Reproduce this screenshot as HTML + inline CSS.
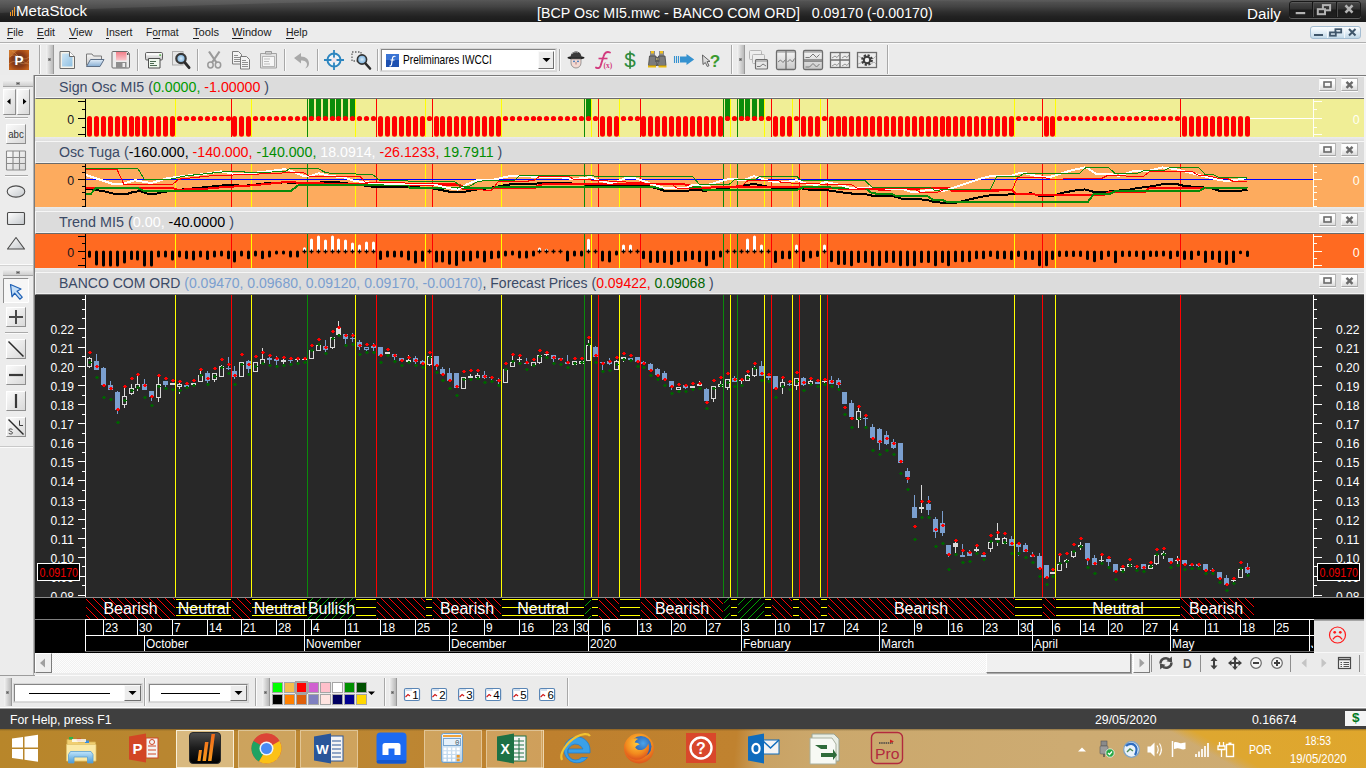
<!DOCTYPE html>
<html><head><meta charset="utf-8"><title>MetaStock</title>
<style>
*{margin:0;padding:0;box-sizing:border-box}
html,body{width:1366px;height:768px;overflow:hidden;background:#ececec}
body{position:relative;font-family:"Liberation Sans",sans-serif;font-size:12px;color:#000}
.a{position:absolute}
svg{position:absolute;left:0;top:0;overflow:visible}
.sep{position:absolute;width:2px;border-left:1px solid #a8a8a8;border-right:1px solid #fbfbfb}
.grip{position:absolute;background:linear-gradient(90deg,#f4f4f4,#d2d2d2 55%,#b9b9b9);border-right:1px solid #9a9a9a}
.grip i{position:absolute;left:2px;width:3px;height:3px;background:#5a5a5a;border:1px solid #8d8d8d}
.tbtn{position:absolute;background:linear-gradient(135deg,#f6f6f6,#dcdcdc);border:1px solid;border-color:#fdfdfd #9c9c9c #9c9c9c #fdfdfd;box-shadow:0 0 0 1px #d0d0d0}
.pt{position:absolute;left:35px;width:1329px;background:#dcdcdc;border-top:1px solid #f6f6f6;border-left:1px solid #f6f6f6;border-bottom:1px solid #6a6a6a;box-shadow:inset 0 -1px 0 #f0f0f0}
.pb{position:absolute;width:17px;height:13px;background:linear-gradient(180deg,#fff 0%,#fbfbfb 40%,#dbdbdb 100%);border:1px solid;border-color:#b2b2b2 #b4b4b4 #a6a6a6 #f6f6f6;box-shadow:0 1px 0 #fbfbfb}
.combo{position:absolute;background:#fff;border:1px solid;border-color:#858585 #dcdcdc #dcdcdc #858585;box-shadow:0 0 0 1px #d6d6d6}
.cbtn{position:absolute;background:#ececec;border:1px solid;border-color:#fafafa #6f6f6f #6f6f6f #fafafa}
</style></head><body>

<div class="a" style="left:0;top:0;width:1366px;height:22px;background:linear-gradient(180deg,#565656 0%,#434343 30%,#2e2e2e 55%,#222 75%,#1b1b1b 100%)"></div>
<svg width="1366" height="22" viewBox="0 0 1366 22"><path d="M0 0H470C330 1 150 6 0 13z" fill="rgba(255,255,255,.075)"/><path d="M235 0H1366V3C900 1 500 0 235 0z" fill="rgba(255,255,255,.03)"/></svg>
<div class="a" style="left:10px;top:12px;width:1px;height:4px;background:#f39a2b"></div>
<div class="a" style="left:12px;top:10px;width:1px;height:6px;background:#f39a2b"></div>
<div class="a" style="left:14px;top:7px;width:1px;height:9px;background:#f39a2b"></div>
<div style="position:absolute;left:15.60px;top:1.00px;height:20px;line-height:20px;font-size:15.20px;letter-spacing:0.000px;white-space:nowrap;transform:scaleX(0.9916);transform-origin:0 0;"><span style="color:#fff">MetaStock</span></div>
<div style="position:absolute;left:537.00px;top:3.00px;height:20px;line-height:20px;font-size:14.60px;letter-spacing:0.000px;white-space:nowrap;transform:scaleX(0.9737);transform-origin:0 0;"><span style="color:#fff">[BCP&nbsp;Osc&nbsp;MI5.mwc&nbsp;-&nbsp;BANCO&nbsp;COM&nbsp;ORD]&nbsp;&nbsp;&nbsp;0.09170&nbsp;(-0.00170)</span></div>
<div style="position:absolute;left:1247.00px;top:3.50px;height:20px;line-height:20px;font-size:15.20px;letter-spacing:0.043px;white-space:nowrap;"><span style="color:#fff">Daily</span></div>
<div class="a" style="left:1289px;top:1px;width:72px;height:17px;border:1px solid #191919;border-radius:3px;background:linear-gradient(180deg,#484848,#303030 48%,#1c1c1c 52%,#202020);box-shadow:0 1px 0 rgba(255,255,255,.28),inset 0 1px 0 rgba(255,255,255,.10)"></div>
<div class="a" style="left:1312px;top:2px;width:2px;height:15px;background:linear-gradient(90deg,#151515 50%,#4c4c4c 50%)"></div>
<div class="a" style="left:1336px;top:2px;width:2px;height:15px;background:linear-gradient(90deg,#151515 50%,#4c4c4c 50%)"></div>
<svg width="1366" height="22" viewBox="0 0 1366 22"><rect x="1295.700" y="12" width="9.500" height="2.200" fill="#b4b4b4"/><rect x="1322.900" y="5.100" width="7.200" height="5.200" fill="none" stroke="#b4b4b4" stroke-width="2"/><rect x="1317.800" y="9.200" width="7.200" height="5" fill="#2a2a2a" stroke="#b4b4b4" stroke-width="2"/><path d="M1345.500 5.300l7 7.300M1352.500 5.300l-7 7.300" stroke="#b4b4b4" stroke-width="2.600"/></svg>
<div class="a" style="left:0;top:22px;width:1366px;height:21px;background:#ececec;border-bottom:1px solid #b0b0b0"></div>
<div class="a" style="left:0;top:43px;width:1366px;height:1px;background:#fafafa"></div>
<div style="position:absolute;left:7.00px;top:24.00px;height:16px;line-height:16px;font-size:11.60px;letter-spacing:0.000px;white-space:nowrap;transform:scaleX(0.8828);transform-origin:0 0;"><span style="color:#1a1a1a">File</span></div>
<div class="a" style="left:7.0px;top:38px;width:6.0px;height:1px;background:#1a1a1a"></div>
<div style="position:absolute;left:37.00px;top:24.00px;height:16px;line-height:16px;font-size:11.60px;letter-spacing:0.000px;white-space:nowrap;transform:scaleX(0.9005);transform-origin:0 0;"><span style="color:#1a1a1a">Edit</span></div>
<div class="a" style="left:37.0px;top:38px;width:7.0px;height:1px;background:#1a1a1a"></div>
<div style="position:absolute;left:69.00px;top:24.00px;height:16px;line-height:16px;font-size:11.60px;letter-spacing:0.000px;white-space:nowrap;transform:scaleX(0.9425);transform-origin:0 0;"><span style="color:#1a1a1a">View</span></div>
<div class="a" style="left:69.0px;top:38px;width:8.0px;height:1px;background:#1a1a1a"></div>
<div style="position:absolute;left:106.00px;top:24.00px;height:16px;line-height:16px;font-size:11.60px;letter-spacing:0.000px;white-space:nowrap;transform:scaleX(0.9135);transform-origin:0 0;"><span style="color:#1a1a1a">Insert</span></div>
<div class="a" style="left:106.0px;top:38px;width:3.0px;height:1px;background:#1a1a1a"></div>
<div style="position:absolute;left:146.00px;top:24.00px;height:16px;line-height:16px;font-size:11.60px;letter-spacing:0.000px;white-space:nowrap;transform:scaleX(0.8847);transform-origin:0 0;"><span style="color:#1a1a1a">Format</span></div>
<div class="a" style="left:153.0px;top:38px;width:7.0px;height:1px;background:#1a1a1a"></div>
<div style="position:absolute;left:192.50px;top:24.00px;height:16px;line-height:16px;font-size:11.60px;letter-spacing:0.000px;white-space:nowrap;transform:scaleX(0.9602);transform-origin:0 0;"><span style="color:#1a1a1a">Tools</span></div>
<div class="a" style="left:192.5px;top:38px;width:6.5px;height:1px;background:#1a1a1a"></div>
<div style="position:absolute;left:232.00px;top:24.00px;height:16px;line-height:16px;font-size:11.60px;letter-spacing:0.000px;white-space:nowrap;transform:scaleX(0.9574);transform-origin:0 0;"><span style="color:#1a1a1a">Window</span></div>
<div class="a" style="left:232.0px;top:38px;width:11.0px;height:1px;background:#1a1a1a"></div>
<div style="position:absolute;left:285.50px;top:24.00px;height:16px;line-height:16px;font-size:11.60px;letter-spacing:0.000px;white-space:nowrap;transform:scaleX(0.9012);transform-origin:0 0;"><span style="color:#1a1a1a">Help</span></div>
<div class="a" style="left:285.5px;top:38px;width:8.5px;height:1px;background:#1a1a1a"></div>
<div class="a" style="left:1310px;top:26px;width:51px;height:13px;border:1px solid #a4bdd2;border-radius:3px;background:linear-gradient(180deg,#fbfdfe 0%,#e4eff7 45%,#c1d8e8 100%)"></div>
<div class="a" style="left:1327px;top:27px;width:1px;height:11px;background:#f2f7fb"></div>
<div class="a" style="left:1344px;top:27px;width:1px;height:11px;background:#f2f7fb"></div>
<svg width="1366" height="44" viewBox="0 0 1366 44"><rect x="1314" y="34" width="9" height="2" fill="#3f566b"/><rect x="1335.400" y="29.200" width="5.800" height="3.300" fill="none" stroke="#3f566b" stroke-width="1.800"/><rect x="1330" y="32.400" width="5.800" height="3.300" fill="#d5e4ef" stroke="#3f566b" stroke-width="1.800"/><path d="M1349 29l6.5 6.5M1355.500 29l-6.5 6.5" stroke="#3f566b" stroke-width="2"/></svg>
<div class="a" style="left:0;top:44px;width:1366px;height:31px;background:#ebebeb"></div>
<svg width="1366" height="80" viewBox="0 0 1366 80"><defs><linearGradient id="gp" x1="0" y1="0" x2="1" y2="1"><stop offset="0" stop-color="#c7661c"/><stop offset=".5" stop-color="#8a2f10"/><stop offset="1" stop-color="#b8511a"/></linearGradient><linearGradient id="gdoc" x1="0" y1="0" x2="1" y2="1"><stop offset="0" stop-color="#cfe6f5"/><stop offset="1" stop-color="#8fc0e2"/></linearGradient><linearGradient id="gsv" x1="0" y1="0" x2="0" y2="1"><stop offset="0" stop-color="#f27f8a"/><stop offset="1" stop-color="#f9c9cd"/></linearGradient><linearGradient id="ggr" x1="0" y1="0" x2="0" y2="1"><stop offset="0" stop-color="#f6f6f6"/><stop offset="1" stop-color="#c9c9c9"/></linearGradient><radialGradient id="glens"><stop offset="0" stop-color="#d8ecfa"/><stop offset="1" stop-color="#6fa9d8"/></radialGradient></defs><radialGradient id="gp2" cx=".5" cy=".5" r=".62"><stop offset="0" stop-color="#4e453f"/><stop offset=".55" stop-color="#8a3a16"/><stop offset="1" stop-color="#c4621c"/></radialGradient><rect x="9" y="50" width="20" height="20" fill="url(#gp2)"/><path d="M9 50h9l-9 8z" fill="#d98a3c" opacity=".55"/><path d="M10 57c5-7 12 7 19 0M9 64c8-8 14 6 20-4M12 51c6 3 10 12 17 13" stroke="#e9a660" stroke-width=".7" fill="none" opacity=".6"/><text x="14.600" y="65" font-family="Liberation Sans" font-weight="bold" font-size="13.500" fill="#fff">P</text><path d="M60 51.500h9.500l5 5v12h-14.500z" fill="#f6f3ea" stroke="#6b6b6b"/><path d="M62 53.500h7l3.500 3.500v9.500h-10.500z" fill="url(#gdoc)"/><path d="M69.500 51.500v5h5" fill="#fdfdfd" stroke="#6b6b6b"/><linearGradient id="gfl" x1="0" y1="0" x2="0" y2="1"><stop offset="0" stop-color="#e3eef8"/><stop offset="1" stop-color="#86add3"/></linearGradient><path d="M86.500 65.500v-11.500h5.500l1.500 2h8v3.500" fill="url(#ggr)" stroke="#7b7b7b"/><path d="M86.500 66.500l4-7h13.500l-4 7z" fill="url(#gfl)" stroke="#5d6f86"/><path d="M113 51.500h14.500l2 2v13.500a1 1 0 0 1-1 1h-15.500a1 1 0 0 1-1-1v-14.500a1 1 0 0 1 1-1z" fill="#ececec" stroke="#6b6b6b"/><rect x="116" y="52" width="10.500" height="8.500" fill="url(#gsv)"/><rect x="116" y="62" width="10.500" height="6" fill="#8e8e8e"/><rect x="122.500" y="63" width="2.500" height="4" fill="#ececec"/><rect x="127" y="53" width="1.500" height="2" fill="#555"/><rect x="145.500" y="52.500" width="17" height="7.500" rx="1.200" fill="url(#ggr)" stroke="#5f5f5f"/><rect x="146.500" y="53.200" width="15" height="2" fill="#fbfbfb"/><rect x="159.300" y="54.300" width="1.800" height="1.600" fill="#57b24d"/><path d="M148.500 58.500h11.500v9.500h-11.500z" fill="#eff8ee" stroke="#4f4f4f"/><path d="M150 61.500h6M150 63.500h3.500M150 65.500h7" stroke="#4c6a52" shape-rendering="crispEdges"/><rect x="172.500" y="51.500" width="10.500" height="13.500" fill="#e6e6e6" stroke="#adadad"/><circle cx="181" cy="58.500" r="4.700" fill="url(#glens)" stroke="#383838" stroke-width="2.200"/><path d="M184.800 62.500l4.300 5.200" stroke="#2c2c2c" stroke-width="2.800" stroke-linecap="round"/><path d="M209 51.500l7.800 11.500M219.500 51.500l-7.800 11.500" stroke="#9a9a9a" stroke-width="2.200"/><ellipse cx="210.500" cy="65" rx="2.700" ry="2.900" fill="none" stroke="#9a9a9a" stroke-width="1.500"/><ellipse cx="218" cy="65" rx="2.700" ry="2.900" fill="none" stroke="#9a9a9a" stroke-width="1.500"/><path d="M232.500 51.500h6l3 3v9.500h-9z" fill="#f3f3f3" stroke="#7b7b7b"/><path d="M234 55.500h4M234 57.500h6M234 59.500h6M234 61.500h6" stroke="#8e8e8e" shape-rendering="crispEdges"/><path d="M240.500 56.500h6l3 3v9.500h-9z" fill="#f3f3f3" stroke="#7b7b7b"/><path d="M242 60.500h4M242 62.500h6M242 64.500h6M242 66.500h6" stroke="#8e8e8e" shape-rendering="crispEdges"/><path d="M260.500 53.500h16v14.500h-16z" fill="#e3e3e3" stroke="#a2a2a2"/><path d="M265.500 54v-2.500h6v2.500z" fill="#d0d0d0" stroke="#9a9a9a"/><rect x="262.500" y="56.500" width="12" height="10" fill="#f6f6f6" stroke="#b7b7b7"/><path d="M264 59h6M264 61.500h5M264 64h6" stroke="#bdbdbd"/><path d="M294 58l7-5v3.500c5 0 8 3 8 7 0 2.500-1.500 4.500-4 5 1.500-1.500 2-2.800 2-4 0-2.500-2.300-4-6-4v3z" fill="#a9a9a9"/><circle cx="334" cy="60" r="6.500" fill="#eef4f8" stroke="#2d86c0" stroke-width="2"/><path d="M334 50v20M324 60h20" stroke="#2d86c0" stroke-width="1.800"/><circle cx="334" cy="60" r="2.600" fill="#f2e4ea"/><rect x="352" y="52" width="9" height="9" fill="none" stroke="#666" stroke-width="1.300" stroke-dasharray="1.500 1.500"/><circle cx="362" cy="59.500" r="4.600" fill="url(#glens)" stroke="#333" stroke-width="1.600"/><path d="M365.500 63.500l4.500 5" stroke="#2c2c2c" stroke-width="2.600" stroke-linecap="round"/><ellipse cx="576" cy="57.800" rx="8.600" ry="1.800" fill="#222"/><path d="M570.500 57.500c0-8 11-8 11 0z" fill="#3a3a3a"/><path d="M572 54c1.500-2 4-2.400 6-1.600" stroke="#999" fill="none"/><path d="M571 59h10v4c0 3-2.500 5-5 5s-5-2-5-5z" fill="#f3d9d3" stroke="#777" stroke-width=".7"/><circle cx="574" cy="61.300" r=".9" fill="#2a6fb8"/><circle cx="578" cy="61.300" r=".9" fill="#2a6fb8"/><path d="M576 62v2.500" stroke="#a77"/><path d="M610 52.500c-3.500-1.500-5.500.5-6.500 4l-3 9.500c-.8 2.200-2.300 2.600-4.500 1.600" stroke="#d23a7e" stroke-width="1.900" fill="none" stroke-linecap="round"/><path d="M598.500 58.500h9" stroke="#d23a7e" stroke-width="1.600"/><text x="603.500" y="68" font-family="Liberation Serif" font-size="7.500" fill="#d23a7e" font-weight="bold">(x)</text><text x="624.300" y="67.300" font-family="Liberation Sans" font-size="20" fill="#2f8a3e" textLength="11.500" lengthAdjust="spacingAndGlyphs">$</text><path d="M630 50.800v18.200" stroke="#2f8a3e" stroke-width="1.200"/><rect x="650" y="51" width="5" height="5" fill="#8a8a8a"/><rect x="659" y="51" width="5" height="5" fill="#8a8a8a"/><rect x="651" y="51" width="3" height="2.500" fill="#f0c020"/><rect x="660" y="51" width="3" height="2.500" fill="#f0c020"/><path d="M649.500 56h6.500l1 9.500h-8.500zM658.500 56h6.500l1 9.500h-8.500z" fill="#7c7c7c" stroke="#444" stroke-width=".8"/><rect x="655" y="57" width="4.500" height="5" fill="#5d5d5d"/><path d="M656 59h3" stroke="#f0e090" stroke-dasharray="1 .5"/><rect x="648" y="65.500" width="8" height="2" fill="#e9b90c"/><rect x="658.500" y="65.500" width="8" height="2" fill="#e9b90c"/><path d="M674.500 56v7M676.500 56v7M678.500 56v7" stroke="#3592d0" stroke-width="1.100"/><path d="M680 56.500h6.500v-2.500l7.700 5.500-7.700 5.500v-2.500h-6.500z" fill="#3592d0"/><path d="M702.500 55l.5 9.500 2.300-2 2 4 1.700-.8-2-4 3-.3z" fill="#dcdcdc" stroke="#555" stroke-width=".9"/><text x="709.800" y="66.500" font-family="Liberation Sans" font-weight="bold" font-size="17" fill="#3a9a2e" textLength="10.500" lengthAdjust="spacingAndGlyphs">?</text><rect x="749.5" y="50.5" width="12" height="9" rx="1" fill="#ededed" stroke="#b5b5b5"/><rect x="752.5" y="54.5" width="12" height="9" rx="1" fill="#ededed" stroke="#b5b5b5"/><rect x="755.500" y="59.500" width="12" height="9.500" rx="1" fill="#e6e6e6" stroke="#6d6d6d" stroke-width="1.200"/><path d="M757 66.500h3l3-2.500 3 2" stroke="#7a7a7a" fill="none"/><path d="M756 61h11" stroke="#8b8b8b"/><rect x="776.500" y="50.500" width="19" height="19" rx="1.500" fill="url(#ggr)" stroke="#6d6d6d" stroke-width="1.300"/><path d="M786 50.500v19" stroke="#6d6d6d" stroke-width="1.300"/><path d="M777 52h18" stroke="#8c8c8c"/><path d="M778 62l2.500-2 2.500 2.500 2.500-3M787.500 62l2.500-2.500 2.500 2.500 2-3.500" stroke="#7a7a7a" fill="none"/><rect x="803.500" y="50.500" width="19" height="19" rx="1.500" fill="url(#ggr)" stroke="#6d6d6d" stroke-width="1.300"/><path d="M803.500 60h19" stroke="#6d6d6d" stroke-width="1.300"/><path d="M804 52h18M804 61.500h18" stroke="#8c8c8c"/><path d="M805.500 57.500h4l3.500-3.500 3.500 3.500 3-3M805.500 67h4l3.500-3.500 3.500 3.500 3-3" stroke="#7a7a7a" fill="none"/><rect x="830.500" y="52.500" width="19" height="15" fill="#ededed" stroke="#6d6d6d" stroke-width="1.300"/><path d="M840 52.500v15M830.500 60h19" stroke="#6d6d6d" stroke-width="1.300"/><path d="M832 58l3-2 2 1.500 2-2.500M842 58l3-2 2 1.500 2-2.500M832 66l3-2 2 1.500 2-2.500M842 66l3-2 2 1.500 2-2.500" stroke="#8a8a8a" fill="none" stroke-width=".9"/><rect x="857.500" y="52.500" width="19" height="15" fill="#ededed" stroke="#6d6d6d" stroke-width="1.300"/><path d="M858 56l4 2 3-3M870 57l3 2 3-3M858 64l4-1.500 2 2M871 64l3-2 2 2" stroke="#b0b0b0" fill="none" stroke-width=".9"/><circle cx="867" cy="60" r="4.300" fill="none" stroke="#3d3d3d" stroke-width="3.200" stroke-dasharray="1.900 1.480"/><circle cx="867" cy="60" r="3.200" fill="none" stroke="#3d3d3d" stroke-width="2"/><circle cx="867" cy="60" r="1.500" fill="#f4f4f4"/></svg>
<div class="sep" style="left:39px;top:45px;height:29px"></div>
<div class="sep" style="left:137px;top:49px;height:22px"></div>
<div class="sep" style="left:197px;top:49px;height:22px"></div>
<div class="sep" style="left:284px;top:49px;height:22px"></div>
<div class="sep" style="left:317px;top:49px;height:22px"></div>
<div class="sep" style="left:377px;top:49px;height:22px"></div>
<div class="sep" style="left:559px;top:49px;height:22px"></div>
<div class="sep" style="left:731px;top:45px;height:29px"></div>
<div class="sep" style="left:887px;top:45px;height:29px"></div>
<div class="grip" style="left:46px;top:45px;width:8px;height:29px"><i style="top:13px"></i></div>
<div class="grip" style="left:737px;top:45px;width:8px;height:29px"><i style="top:13px"></i></div>
<div class="combo" style="left:381px;top:49px;width:175px;height:22px"></div>
<div class="cbtn" style="left:538px;top:51px;width:16px;height:18px"></div>
<svg width="1366" height="80" viewBox="0 0 1366 80"><path d="M542.500 58h8l-4 4z" fill="#000"/><rect x="386" y="54" width="13" height="13" fill="#1d50b0"/><rect x="386" y="54" width="13" height="6" fill="#3a74d4"/><path d="M395.500 56.500c-2.500-1-3 1-3.200 3l-.8 5c-.2 1.200-1 1.600-2 1.200M390.500 60h4" stroke="#fff" stroke-width="1.2" fill="none"/></svg>
<div style="position:absolute;left:402.50px;top:52.00px;height:16px;line-height:16px;font-size:12.20px;letter-spacing:0.000px;white-space:nowrap;transform:scaleX(0.8310);transform-origin:0 0;"><span style="color:#000">Preliminares&nbsp;IWCCI</span></div>
<div class="a" style="left:0;top:75px;width:34px;height:600px;background:#ececec"></div>
<div class="a" style="left:0;top:264px;width:34px;height:1px;background:#fbfbfb"></div>
<div class="a" style="left:0;top:265px;width:34px;height:1px;background:#d2d2d2"></div>
<div class="a" style="left:0;top:447px;width:34px;height:1px;background:#fbfbfb"></div>
<div class="a" style="left:0;top:446px;width:34px;height:1px;background:#c9c9c9"></div>
<div class="a" style="left:3px;top:80px;width:30px;height:7px;background:linear-gradient(180deg,#f0f0f0,#cfcfcf);border-bottom:1px solid #a5a5a5"></div>
<div class="a" style="left:16px;top:82px;width:4px;height:3px;background:#5a5a5a;border:1px solid #9a9a9a"></div>
<div class="a" style="left:3px;top:269px;width:30px;height:7px;background:linear-gradient(180deg,#f0f0f0,#cfcfcf);border-bottom:1px solid #a5a5a5"></div>
<div class="a" style="left:16px;top:271px;width:4px;height:3px;background:#5a5a5a;border:1px solid #9a9a9a"></div>
<svg width="40" height="700" viewBox="0 0 40 700"><defs><linearGradient id="lb" x1="0" y1="0" x2="1" y2="1"><stop offset="0" stop-color="#fbfbfb"/><stop offset="1" stop-color="#d8d8d8"/></linearGradient><linearGradient id="lsh" x1="0" y1="0" x2="1" y2="1"><stop offset="0" stop-color="#ffffff"/><stop offset="1" stop-color="#c4c8cc"/></linearGradient></defs><rect x="3.5" y="89.5" width="12" height="25" fill="url(#lb)" stroke="#b8b8b8"/><path d="M4 114.5h12M15.5 90v25" stroke="#8e8e8e" fill="none"/><path d="M3 89.5h12M3.5 89v25" stroke="#fff" fill="none"/><rect x="17.5" y="89.5" width="12" height="25" fill="url(#lb)" stroke="#b8b8b8"/><path d="M18 114.5h12M29.5 90v25" stroke="#8e8e8e" fill="none"/><path d="M17 89.5h12M17.5 89v25" stroke="#fff" fill="none"/><path d="M7 101.500l3.500-3v6zM26.500 101.500l-3.500-3v6z" fill="#000"/><path d="M5 117.500h23" stroke="#a9a9a9"/><path d="M5 118.500h23" stroke="#fbfbfb"/><rect x="6.5" y="124.5" width="19" height="19" fill="url(#lb)" stroke="#b8b8b8"/><path d="M7 143.5h19M25.5 125v19" stroke="#8e8e8e" fill="none"/><path d="M6 124.5h19M6.5 124v19" stroke="#fff" fill="none"/><text x="8.200" y="138" font-family="Liberation Sans" font-size="10.500" fill="#333" textLength="15.500" lengthAdjust="spacingAndGlyphs">abc</text><rect x="6.500" y="151" width="19" height="19" fill="url(#lb)"/><path d="M6.500 151v19M13 151v19M19.500 151v19M25.500 151v19M6.500 151h19M6.500 157.500h19M6.500 163.500h19M6.500 170h19" stroke="#8a8a8a" stroke-width="1.100" fill="none"/><path d="M5 175.500h23" stroke="#a9a9a9"/><path d="M5 176.500h23" stroke="#fbfbfb"/><ellipse cx="16" cy="191.500" rx="8.800" ry="5.600" fill="url(#lsh)" stroke="#4b4b4b" stroke-width="1.100"/><rect x="7.500" y="212.500" width="17" height="12" rx="1" fill="url(#lsh)" stroke="#4b4b4b" stroke-width="1.100"/><path d="M16 237.500l8.500 11.500h-17z" fill="url(#lsh)" stroke="#4b4b4b" stroke-width="1.100" stroke-linejoin="round"/><rect x="3.500" y="278.500" width="25" height="24" fill="#f6f6f6" stroke="#cfcfcf" stroke-dasharray="1 1"/><path d="M3.500 303v-24.500h25" stroke="#8f8f8f" fill="none"/><path d="M4 302.500h24.500v-24" stroke="#fff" fill="none"/><path d="M10.500 284.500l10.500 4.500-4 2.200 5.200 6-2.400 2-5.200-6-2.600 3.600z" fill="#c4def7" stroke="#1d5fb4" stroke-width="1.200" stroke-linejoin="round"/><rect x="6.5" y="307.5" width="19" height="19" fill="url(#lb)" stroke="#b8b8b8"/><path d="M7 326.5h19M25.5 308v19" stroke="#8e8e8e" fill="none"/><path d="M6 307.5h19M6.5 307v19" stroke="#fff" fill="none"/><path d="M16 310v14M9 317h14" stroke="#4a4a4a" stroke-width="2"/><path d="M5 332.500h23" stroke="#a9a9a9"/><path d="M5 333.500h23" stroke="#fbfbfb"/><rect x="6.5" y="339.5" width="19" height="19" fill="url(#lb)" stroke="#b8b8b8"/><path d="M7 358.5h19M25.5 340v19" stroke="#8e8e8e" fill="none"/><path d="M6 339.5h19M6.5 339v19" stroke="#fff" fill="none"/><path d="M8.500 341.500l15 15" stroke="#2a2a2a" stroke-width="1.500"/><rect x="6.5" y="365.5" width="19" height="19" fill="url(#lb)" stroke="#b8b8b8"/><path d="M7 384.5h19M25.5 366v19" stroke="#8e8e8e" fill="none"/><path d="M6 365.5h19M6.5 365v19" stroke="#fff" fill="none"/><path d="M9 375h14" stroke="#3a3a3a" stroke-width="2.200"/><rect x="6.5" y="391.5" width="19" height="19" fill="url(#lb)" stroke="#b8b8b8"/><path d="M7 410.5h19M25.5 392v19" stroke="#8e8e8e" fill="none"/><path d="M6 391.5h19M6.5 391v19" stroke="#fff" fill="none"/><path d="M16 394v14" stroke="#3a3a3a" stroke-width="2.200"/><rect x="6.5" y="417.5" width="19" height="19" fill="url(#lb)" stroke="#b8b8b8"/><path d="M7 436.5h19M25.5 418v19" stroke="#8e8e8e" fill="none"/><path d="M6 417.5h19M6.5 417v19" stroke="#fff" fill="none"/><path d="M8.500 419.500l15 15" stroke="#2a2a2a" stroke-width="1.400"/><path d="M19.500 420.500v5h3.500" stroke="#3a3a3a" fill="none"/><path d="M12.500 429.500c-2-1.200-3.700-.6-3.500.7.300 1.500 3.400 1 3.500 2.600.1 1.300-2 1.700-3.800.5" stroke="#3a3a3a" fill="none" stroke-width=".9"/></svg>
<div class="a" style="left:34px;top:75px;width:1331px;height:600px;background:#e3e3e3"></div>
<div class="a" style="left:33px;top:75px;width:1px;height:600px;background:#b4b4b4"></div>
<div class="a" style="left:35px;top:137px;width:1329px;height:4px;background:linear-gradient(180deg,#ebebeb,#dedede)"></div>
<div class="a" style="left:35px;top:207px;width:1329px;height:4px;background:linear-gradient(180deg,#ebebeb,#dedede)"></div>
<div class="a" style="left:35px;top:268px;width:1329px;height:4px;background:linear-gradient(180deg,#ebebeb,#dedede)"></div>
<div class="a" style="left:34px;top:75px;width:1px;height:598px;background:#7a7a7a"></div>
<div class="a" style="left:34px;top:75px;width:1332px;height:1px;background:#7a7a7a"></div>
<div class="a" style="left:1364px;top:76px;width:2px;height:598px;background:#f3f3f3"></div>
<div class="pt" style="top:76px;height:23px"></div>
<div style="position:absolute;left:59.30px;top:76.80px;height:20px;line-height:20px;font-size:15.20px;letter-spacing:0.000px;white-space:nowrap;transform:scaleX(0.9354);transform-origin:0 0;"><span style="color:#3b4a66">Sign&nbsp;Osc&nbsp;MI5&nbsp;(</span><span style="color:#009a00">0.0000,&nbsp;</span><span style="color:#ff0000">-1.00000&nbsp;</span><span style="color:#3b4a66">)</span></div>
<div class="pb" style="left:1319px;top:78px"></div><div class="pb" style="left:1341px;top:78px"></div>
<svg width="1366" height="768" viewBox="0 0 1366 768"><rect x="1324" y="82" width="7" height="5" fill="none" stroke="#6a6a6a" stroke-width="1.6"/><path d="M1346.500 81.9l6 6M1352.500 81.9l-6 6" stroke="#6a6a6a" stroke-width="2.4"/></svg>
<div class="a" style="left:35px;top:99px;width:1329px;height:38px;background:#f0ee96"></div>
<div class="pt" style="top:141px;height:23px"></div>
<div style="position:absolute;left:59.30px;top:141.80px;height:20px;line-height:20px;font-size:15.20px;letter-spacing:0.000px;white-space:nowrap;transform:scaleX(0.9339);transform-origin:0 0;"><span style="color:#3b4a66">Osc&nbsp;Tuga&nbsp;(</span><span style="color:#000">-160.000,&nbsp;</span><span style="color:#ff0000">-140.000,&nbsp;</span><span style="color:#008c00">-140.000,&nbsp;</span><span style="color:#fff">18.0914,&nbsp;</span><span style="color:#ff0000">-26.1233,&nbsp;</span><span style="color:#008c00">19.7911&nbsp;</span><span style="color:#3b4a66">)</span></div>
<div class="pb" style="left:1319px;top:143px"></div><div class="pb" style="left:1341px;top:143px"></div>
<svg width="1366" height="768" viewBox="0 0 1366 768"><rect x="1324" y="147" width="7" height="5" fill="none" stroke="#6a6a6a" stroke-width="1.6"/><path d="M1346.500 146.9l6 6M1352.500 146.9l-6 6" stroke="#6a6a6a" stroke-width="2.4"/></svg>
<div class="a" style="left:35px;top:164px;width:1329px;height:43px;background:#fdab5e"></div>
<div class="pt" style="top:211px;height:23px"></div>
<div style="position:absolute;left:59.30px;top:211.80px;height:20px;line-height:20px;font-size:15.20px;letter-spacing:0.000px;white-space:nowrap;transform:scaleX(0.9455);transform-origin:0 0;"><span style="color:#3b4a66">Trend&nbsp;MI5&nbsp;(</span><span style="color:#fff">0.00,&nbsp;</span><span style="color:#000">-40.0000&nbsp;</span><span style="color:#3b4a66">)</span></div>
<div class="pb" style="left:1319px;top:213px"></div><div class="pb" style="left:1341px;top:213px"></div>
<svg width="1366" height="768" viewBox="0 0 1366 768"><rect x="1324" y="217" width="7" height="5" fill="none" stroke="#6a6a6a" stroke-width="1.6"/><path d="M1346.500 216.9l6 6M1352.500 216.9l-6 6" stroke="#6a6a6a" stroke-width="2.4"/></svg>
<div class="a" style="left:35px;top:234px;width:1329px;height:34px;background:#ff6a21"></div>
<div class="pt" style="top:272px;height:23px"></div>
<div style="position:absolute;left:59.30px;top:272.80px;height:20px;line-height:20px;font-size:15.20px;letter-spacing:0.000px;white-space:nowrap;transform:scaleX(0.9221);transform-origin:0 0;"><span style="color:#3b4a66">BANCO&nbsp;COM&nbsp;ORD&nbsp;</span><span style="color:#7b9fcf">(0.09470,&nbsp;0.09680,&nbsp;0.09120,&nbsp;0.09170,&nbsp;-0.00170)</span><span style="color:#3b4a66">,&nbsp;Forecast&nbsp;Prices&nbsp;(</span><span style="color:#ff0000">0.09422,&nbsp;</span><span style="color:#006400">0.09068&nbsp;</span><span style="color:#3b4a66">)</span></div>
<div class="pb" style="left:1319px;top:274px"></div><div class="pb" style="left:1341px;top:274px"></div>
<svg width="1366" height="768" viewBox="0 0 1366 768"><rect x="1324" y="278" width="7" height="5" fill="none" stroke="#6a6a6a" stroke-width="1.6"/><path d="M1346.500 277.9l6 6M1352.500 277.9l-6 6" stroke="#6a6a6a" stroke-width="2.4"/></svg>
<div class="a" style="left:35px;top:295px;width:1329px;height:302px;background:#282828"></div>
<svg width="1366" height="768" viewBox="0 0 1366 768" shape-rendering="auto"><defs><clipPath id="c1"><rect x="35" y="99" width="1329" height="38"/></clipPath><clipPath id="c2"><rect x="35" y="164" width="1329" height="43"/></clipPath><clipPath id="c3"><rect x="35" y="234" width="1329" height="34"/></clipPath><clipPath id="c4"><rect x="35" y="295" width="1329" height="302"/></clipPath><pattern id="hr" patternUnits="userSpaceOnUse" width="8" height="8"><rect x="0" y="1" width="1" height="1" fill="#ff0000"/><rect x="1" y="2" width="1" height="1" fill="#ff0000"/><rect x="2" y="3" width="1" height="1" fill="#ff0000"/><rect x="3" y="4" width="1" height="1" fill="#ff0000"/><rect x="4" y="5" width="1" height="1" fill="#ff0000"/><rect x="5" y="6" width="1" height="1" fill="#ff0000"/><rect x="6" y="7" width="1" height="1" fill="#ff0000"/><rect x="7" y="0" width="1" height="1" fill="#ff0000"/></pattern><pattern id="hg" patternUnits="userSpaceOnUse" width="8" height="8"><rect x="0" y="6" width="1" height="1" fill="#00a400"/><rect x="1" y="5" width="1" height="1" fill="#00a400"/><rect x="2" y="4" width="1" height="1" fill="#00a400"/><rect x="3" y="3" width="1" height="1" fill="#00a400"/><rect x="4" y="2" width="1" height="1" fill="#00a400"/><rect x="5" y="1" width="1" height="1" fill="#00a400"/><rect x="6" y="0" width="1" height="1" fill="#00a400"/><rect x="7" y="7" width="1" height="1" fill="#00a400"/></pattern></defs><g stroke-width="1" shape-rendering="crispEdges"><path d="M175.5 99V137" stroke="#ffff00"/><path d="M175.5 164V207" stroke="#ffff00"/><path d="M175.5 234V268" stroke="#ffff00"/><path d="M175.5 295V597" stroke="#ffff00"/><path d="M231.5 99V137" stroke="#ff0000"/><path d="M231.5 164V207" stroke="#ff0000"/><path d="M231.5 234V268" stroke="#ff0000"/><path d="M231.5 295V597" stroke="#ff0000"/><path d="M251.5 99V137" stroke="#ffff00"/><path d="M251.5 164V207" stroke="#ffff00"/><path d="M251.5 234V268" stroke="#ffff00"/><path d="M251.5 295V597" stroke="#ffff00"/><path d="M307.5 99V137" stroke="#0a8a0a"/><path d="M307.5 164V207" stroke="#0a8a0a"/><path d="M307.5 234V268" stroke="#0a8a0a"/><path d="M307.5 295V597" stroke="#0a8a0a"/><path d="M355.5 99V137" stroke="#ffff00"/><path d="M355.5 164V207" stroke="#ffff00"/><path d="M355.5 234V268" stroke="#ffff00"/><path d="M355.5 295V597" stroke="#ffff00"/><path d="M376.5 99V137" stroke="#ff0000"/><path d="M376.5 164V207" stroke="#ff0000"/><path d="M376.5 234V268" stroke="#ff0000"/><path d="M376.5 295V597" stroke="#ff0000"/><path d="M425.5 99V137" stroke="#ffff00"/><path d="M425.5 164V207" stroke="#ffff00"/><path d="M425.5 234V268" stroke="#ffff00"/><path d="M425.5 295V597" stroke="#ffff00"/><path d="M432.5 99V137" stroke="#ff0000"/><path d="M432.5 164V207" stroke="#ff0000"/><path d="M432.5 234V268" stroke="#ff0000"/><path d="M432.5 295V597" stroke="#ff0000"/><path d="M501.5 99V137" stroke="#ffff00"/><path d="M501.5 164V207" stroke="#ffff00"/><path d="M501.5 234V268" stroke="#ffff00"/><path d="M501.5 295V597" stroke="#ffff00"/><path d="M584.5 99V137" stroke="#0a8a0a"/><path d="M584.5 164V207" stroke="#0a8a0a"/><path d="M584.5 234V268" stroke="#0a8a0a"/><path d="M584.5 295V597" stroke="#0a8a0a"/><path d="M591.5 99V137" stroke="#ffff00"/><path d="M591.5 164V207" stroke="#ffff00"/><path d="M591.5 234V268" stroke="#ffff00"/><path d="M591.5 295V597" stroke="#ffff00"/><path d="M598.5 99V137" stroke="#ff0000"/><path d="M598.5 164V207" stroke="#ff0000"/><path d="M598.5 234V268" stroke="#ff0000"/><path d="M598.5 295V597" stroke="#ff0000"/><path d="M619.5 99V137" stroke="#ffff00"/><path d="M619.5 164V207" stroke="#ffff00"/><path d="M619.5 234V268" stroke="#ffff00"/><path d="M619.5 295V597" stroke="#ffff00"/><path d="M640.5 99V137" stroke="#ff0000"/><path d="M640.5 164V207" stroke="#ff0000"/><path d="M640.5 234V268" stroke="#ff0000"/><path d="M640.5 295V597" stroke="#ff0000"/><path d="M723.5 99V137" stroke="#0a8a0a"/><path d="M723.5 164V207" stroke="#0a8a0a"/><path d="M723.5 234V268" stroke="#0a8a0a"/><path d="M723.5 295V597" stroke="#0a8a0a"/><path d="M730.5 99V137" stroke="#ffff00"/><path d="M730.5 164V207" stroke="#ffff00"/><path d="M730.5 234V268" stroke="#ffff00"/><path d="M730.5 295V597" stroke="#ffff00"/><path d="M737.5 99V137" stroke="#0a8a0a"/><path d="M737.5 164V207" stroke="#0a8a0a"/><path d="M737.5 234V268" stroke="#0a8a0a"/><path d="M737.5 295V597" stroke="#0a8a0a"/><path d="M764.5 99V137" stroke="#ffff00"/><path d="M764.5 164V207" stroke="#ffff00"/><path d="M764.5 234V268" stroke="#ffff00"/><path d="M764.5 295V597" stroke="#ffff00"/><path d="M771.5 99V137" stroke="#ff0000"/><path d="M771.5 164V207" stroke="#ff0000"/><path d="M771.5 234V268" stroke="#ff0000"/><path d="M771.5 295V597" stroke="#ff0000"/><path d="M792.5 99V137" stroke="#ffff00"/><path d="M792.5 164V207" stroke="#ffff00"/><path d="M792.5 234V268" stroke="#ffff00"/><path d="M792.5 295V597" stroke="#ffff00"/><path d="M799.5 99V137" stroke="#ff0000"/><path d="M799.5 164V207" stroke="#ff0000"/><path d="M799.5 234V268" stroke="#ff0000"/><path d="M799.5 295V597" stroke="#ff0000"/><path d="M820.5 99V137" stroke="#ffff00"/><path d="M820.5 164V207" stroke="#ffff00"/><path d="M820.5 234V268" stroke="#ffff00"/><path d="M820.5 295V597" stroke="#ffff00"/><path d="M827.5 99V137" stroke="#ff0000"/><path d="M827.5 164V207" stroke="#ff0000"/><path d="M827.5 234V268" stroke="#ff0000"/><path d="M827.5 295V597" stroke="#ff0000"/><path d="M1014.5 99V137" stroke="#ffff00"/><path d="M1014.5 164V207" stroke="#ffff00"/><path d="M1014.5 234V268" stroke="#ffff00"/><path d="M1014.5 295V597" stroke="#ffff00"/><path d="M1042.5 99V137" stroke="#ff0000"/><path d="M1042.5 164V207" stroke="#ff0000"/><path d="M1042.5 234V268" stroke="#ff0000"/><path d="M1042.5 295V597" stroke="#ff0000"/><path d="M1055.5 99V137" stroke="#ffff00"/><path d="M1055.5 164V207" stroke="#ffff00"/><path d="M1055.5 234V268" stroke="#ffff00"/><path d="M1055.5 295V597" stroke="#ffff00"/><path d="M1180.5 99V137" stroke="#ff0000"/><path d="M1180.5 164V207" stroke="#ff0000"/><path d="M1180.5 234V268" stroke="#ff0000"/><path d="M1180.5 295V597" stroke="#ff0000"/></g><g clip-path="url(#c1)"><path d="M311.5 118V95M318.5 118V95M325.5 118V95M332.5 118V95M338.5 118V95M345.5 118V95M352.5 118V95M588.5 118V95M727.5 118V95M741.5 118V95M747.5 118V95M754.5 118V95M761.5 118V95" stroke="#0a8c0a" stroke-width="5" stroke-linecap="round" fill="none"/><path d="M89.5 118.500V134.300M96.5 118.500V134.300M103.5 118.500V134.300M110.5 118.500V134.300M117.5 118.500V134.300M124.5 118.500V134.300M131.5 118.500V134.300M137.5 118.500V134.300M144.5 118.500V134.300M151.5 118.500V134.300M158.5 118.500V134.300M165.5 118.500V134.300M172.5 118.500V134.300M234.5 118.500V134.300M241.5 118.500V134.300M248.5 118.500V134.300M380.5 118.500V134.300M387.5 118.500V134.300M394.5 118.500V134.300M401.5 118.500V134.300M408.5 118.500V134.300M415.5 118.500V134.300M422.5 118.500V134.300M436.5 118.500V134.300M442.5 118.500V134.300M449.5 118.500V134.300M456.5 118.500V134.300M463.5 118.500V134.300M470.5 118.500V134.300M477.5 118.500V134.300M484.5 118.500V134.300M491.5 118.500V134.300M498.5 118.500V134.300M602.5 118.500V134.300M609.5 118.500V134.300M616.5 118.500V134.300M643.5 118.500V134.300M650.5 118.500V134.300M657.5 118.500V134.300M664.5 118.500V134.300M671.5 118.500V134.300M678.5 118.500V134.300M685.5 118.500V134.300M692.5 118.500V134.300M699.5 118.500V134.300M706.5 118.500V134.300M713.5 118.500V134.300M720.5 118.500V134.300M775.5 118.500V134.300M782.5 118.500V134.300M789.5 118.500V134.300M803.5 118.500V134.300M810.5 118.500V134.300M817.5 118.500V134.300M831.5 118.500V134.300M838.5 118.500V134.300M844.5 118.500V134.300M851.5 118.500V134.300M858.5 118.500V134.300M865.5 118.500V134.300M872.5 118.500V134.300M879.5 118.500V134.300M886.5 118.500V134.300M893.5 118.500V134.300M900.5 118.500V134.300M907.5 118.500V134.300M914.5 118.500V134.300M921.5 118.500V134.300M928.5 118.500V134.300M935.5 118.500V134.300M942.5 118.500V134.300M948.5 118.500V134.300M955.5 118.500V134.300M962.5 118.500V134.300M969.5 118.500V134.300M976.5 118.500V134.300M983.5 118.500V134.300M990.5 118.500V134.300M997.5 118.500V134.300M1004.5 118.500V134.300M1011.5 118.500V134.300M1046.5 118.500V134.300M1052.5 118.500V134.300M1184.5 118.500V134.300M1191.5 118.500V134.300M1198.5 118.500V134.300M1205.5 118.500V134.300M1212.5 118.500V134.300M1219.5 118.500V134.300M1226.5 118.500V134.300M1233.5 118.500V134.300M1240.5 118.500V134.300M1247.5 118.500V134.300" stroke="#ff0000" stroke-width="5" stroke-linecap="round" fill="none"/><g fill="#ff0000"><circle cx="179.5" cy="118.500" r="2.600"/><circle cx="186.5" cy="118.500" r="2.600"/><circle cx="193.5" cy="118.500" r="2.600"/><circle cx="200.5" cy="118.500" r="2.600"/><circle cx="207.5" cy="118.500" r="2.600"/><circle cx="214.5" cy="118.500" r="2.600"/><circle cx="221.5" cy="118.500" r="2.600"/><circle cx="228.5" cy="118.500" r="2.600"/><circle cx="255.5" cy="118.500" r="2.600"/><circle cx="262.5" cy="118.500" r="2.600"/><circle cx="269.5" cy="118.500" r="2.600"/><circle cx="276.5" cy="118.500" r="2.600"/><circle cx="283.5" cy="118.500" r="2.600"/><circle cx="290.5" cy="118.500" r="2.600"/><circle cx="297.5" cy="118.500" r="2.600"/><circle cx="304.5" cy="118.500" r="2.600"/><circle cx="311.5" cy="118.500" r="2.600"/><circle cx="318.5" cy="118.500" r="2.600"/><circle cx="325.5" cy="118.500" r="2.600"/><circle cx="332.5" cy="118.500" r="2.600"/><circle cx="338.5" cy="118.500" r="2.600"/><circle cx="345.5" cy="118.500" r="2.600"/><circle cx="352.5" cy="118.500" r="2.600"/><circle cx="359.5" cy="118.500" r="2.600"/><circle cx="366.5" cy="118.500" r="2.600"/><circle cx="373.5" cy="118.500" r="2.600"/><circle cx="429.5" cy="118.500" r="2.600"/><circle cx="505.5" cy="118.500" r="2.600"/><circle cx="512.5" cy="118.500" r="2.600"/><circle cx="519.5" cy="118.500" r="2.600"/><circle cx="526.5" cy="118.500" r="2.600"/><circle cx="533.5" cy="118.500" r="2.600"/><circle cx="539.5" cy="118.500" r="2.600"/><circle cx="546.5" cy="118.500" r="2.600"/><circle cx="553.5" cy="118.500" r="2.600"/><circle cx="560.5" cy="118.500" r="2.600"/><circle cx="567.5" cy="118.500" r="2.600"/><circle cx="574.5" cy="118.500" r="2.600"/><circle cx="581.5" cy="118.500" r="2.600"/><circle cx="588.5" cy="118.500" r="2.600"/><circle cx="595.5" cy="118.500" r="2.600"/><circle cx="623.5" cy="118.500" r="2.600"/><circle cx="630.5" cy="118.500" r="2.600"/><circle cx="637.5" cy="118.500" r="2.600"/><circle cx="727.5" cy="118.500" r="2.600"/><circle cx="734.5" cy="118.500" r="2.600"/><circle cx="741.5" cy="118.500" r="2.600"/><circle cx="747.5" cy="118.500" r="2.600"/><circle cx="754.5" cy="118.500" r="2.600"/><circle cx="761.5" cy="118.500" r="2.600"/><circle cx="768.5" cy="118.500" r="2.600"/><circle cx="796.5" cy="118.500" r="2.600"/><circle cx="824.5" cy="118.500" r="2.600"/><circle cx="1018.5" cy="118.500" r="2.600"/><circle cx="1025.5" cy="118.500" r="2.600"/><circle cx="1032.5" cy="118.500" r="2.600"/><circle cx="1039.5" cy="118.500" r="2.600"/><circle cx="1059.5" cy="118.500" r="2.600"/><circle cx="1066.5" cy="118.500" r="2.600"/><circle cx="1073.5" cy="118.500" r="2.600"/><circle cx="1080.5" cy="118.500" r="2.600"/><circle cx="1087.5" cy="118.500" r="2.600"/><circle cx="1094.5" cy="118.500" r="2.600"/><circle cx="1101.5" cy="118.500" r="2.600"/><circle cx="1108.5" cy="118.500" r="2.600"/><circle cx="1115.5" cy="118.500" r="2.600"/><circle cx="1122.5" cy="118.500" r="2.600"/><circle cx="1129.5" cy="118.500" r="2.600"/><circle cx="1136.5" cy="118.500" r="2.600"/><circle cx="1143.5" cy="118.500" r="2.600"/><circle cx="1150.5" cy="118.500" r="2.600"/><circle cx="1156.5" cy="118.500" r="2.600"/><circle cx="1163.5" cy="118.500" r="2.600"/><circle cx="1170.5" cy="118.500" r="2.600"/><circle cx="1177.5" cy="118.500" r="2.600"/></g><path d="M1250 118.500H1313" stroke="#fff" stroke-width="1" shape-rendering="crispEdges"/></g><g shape-rendering="crispEdges" stroke-width="1"><path d="M85.500 99V137M78 101.500H86M82 109.500H86M78 118.500H86M82 127.500H86M78 134.500H86" stroke="#000"/><path d="M1313.500 99V137M1313 101.500H1322M1313 109.500H1317M1313 118.500H1322M1313 127.500H1317M1313 134.500H1322" stroke="#fffff4"/><path d="M85.500 164V207M82 166.500H86M82 172.500H86M78 179.500H86M82 186.500H86M82 192.500H86M82 199.500H86M82 206.500H86" stroke="#000"/><path d="M1313.500 164V207M1313 166.500H1317M1313 172.500H1317M1313 179.500H1322M1313 186.500H1317M1313 192.500H1317M1313 199.500H1317M1313 206.500H1317" stroke="#fffff4"/><path d="M85.500 234V268M78 236.500H86M82 243.500H86M78 251.500H86M82 258.500H86M78 265.500H86" stroke="#000"/><path d="M1313.500 234V268M1313 236.500H1322M1313 243.500H1317M1313 251.500H1322M1313 258.500H1317M1313 265.500H1322" stroke="#fffff4"/></g><g clip-path="url(#c2)" fill="none" stroke-linejoin="round" shape-rendering="crispEdges"><path d="M86 179.500H1313" stroke="#0000ff" stroke-width="1" shape-rendering="crispEdges"/><path d="M86 188.5L104 191.2L114.3 193.8L127.5 193.8L133.3 191.9L140.6 191.2L148 193.8L155.3 193.8L164 191.9L180.2 189.7L202 187.5L224 185.3L246 185.6L268 183.1L285 182.4L296.7 183.1L336 182.1L355 184.3L372.8 186.8L408 186.8L431.4 188.2L443 190.4L450.4 191.9L463.6 191.9L475 189.7L490 188L504 185.3L514.3 183.8L536.2 183.8L540.6 182.7L561 182.7L595 185.3L646 185.3L653.4 187.5L665 190.9L685 190.9L696.7 189.7L704 190.9L714.3 189.7L743.6 185.6L753.8 183.8L762.6 185.6L772.8 188L799.2 188L809.5 189.7L824 189.7L838.7 191.9L849 193.4L865 194.1L873.9 196L885 196L893.8 196.3L901 198.5L926 199.7L933.3 201.7L943.6 202.9L955.3 202.9L967 200L980.2 197L993.3 194.8L1013.8 194.4L1031.4 193.4L1040.2 196L1052 196L1063.6 192.6L1075.3 190.4L1085 189.4L1093.8 191.9L1105.5 191.9L1114.3 190.9L1129 189.7L1137.7 188L1153.8 186L1164 183.8L1175.8 183.8L1184.6 186L1199.2 187.1L1211 188.2L1219.7 190.9L1238.7 190.9L1247.5 189.7" stroke="#000" stroke-width="2"/><path d="M86 188L172.8 188L177.2 189.7L202 189L224 187.1L253.4 185.3L285 182.1L331.9 183.8L409.5 184.6L456.3 184.6L470 187.5L485 188.2L534.8 188.2L539.2 184.6L560 183.8L673.9 183.8L685 184.5L704 188.5L714.3 187.1L799.2 187.1L803.6 187.5L825.6 188.2L885 189.7L929 188.2L949.4 188.2L952.3 190.9L1012.4 190.4L1016.8 194.4L1085 194.8L1104 194.8L1110 191.9L1145 191.9L1149.4 188.2L1202 188.2L1247.5 188.5" stroke="#ff0000" stroke-width="2"/><path d="M86 193.8L90.9 193.8L96 188L137.7 188L143.6 190.9L290.9 190.9L298.2 185.3L408 185.3L409.5 187.5L493.8 187.5L496.7 186.8L650.4 186.8L660.7 188.2L685 188.5L699.6 186.8L704 189.7L797.7 189.7L803.6 187.1L865 188L872.4 193.4L892.3 194.1L896.7 196.3L927.5 196.3L933.3 200L942 200L946.5 201.7L1088 201.7L1093.8 193.8L1110 193.8L1115.7 190.9L1199.2 190.9L1205 187.5L1247.5 188.2" stroke="#0a8a0a" stroke-width="2"/><path d="M86 175L111.4 183.5L123.8 183.5L134.8 180.2L151 183.1L167 178.4L184.6 175.8L202 174.3L221.2 171.4L232.9 173.6L246 173.6L260.7 172.1L285 169.2L290.9 170.7L304 176.2L310 176.2L318.7 173.3L329 175.8L343.6 177.3L353.8 180.9L367 182.4L380.2 183.4L409.5 184.3L431.4 183.8L446 187.5L457.8 189.7L468 183.8L478.3 179.9L493.8 179.7L502.6 177.6L512.8 175.5L518.7 176.2L561 177.3L572.8 179L584.6 178L590.4 177L597.7 180.2L609.5 183.1L616.8 181.7L625.6 178L634.3 178L643 180.9L653.4 184.6L665 188.2L685 188.3L693.8 184.6L707 185.3L718.7 181.7L730.4 178.7L743.6 180.2L753.8 176.2L764 179.5L775.8 182.4L787.5 181.7L797 180.2L806.5 183.8L816.8 185L825.6 182.1L838.7 184.6L849 187.5L860.7 188.5L869.5 187.5L885 188.5L901 188.5L911.4 191.9L918.7 191.9L929 189.7L943.6 190.9L950.9 188.5L965.5 183.6L978.7 179.2L990.4 176.2L1002 176.2L1011 175.8L1019.7 172.9L1025.6 173.3L1037.3 176.2L1049 177.3L1060.7 173.6L1072.4 170L1085 167.4L1088 168.5L1096.7 174.3L1108.4 173.6L1118.7 175.8L1134.8 170.7L1148 171L1162.6 167.4L1175.8 169.2L1190.4 172.9L1202 175.8L1216.8 179.5L1225.6 180.9L1234.3 180.2L1246.8 178" stroke="#fff" stroke-width="2"/><path d="M86 169.6L117.2 169.6L123.8 184.3L172.8 184.3L178.7 179.2L211 175.8L252 174.3L285 172.9L304 172.9L309.2 176.2L359.7 176.2L365.5 182.4L456.3 183.8L462.2 189L485 190.1L491.6 190.1L498.2 181.7L533.3 180.9L539.2 176.5L569.2 176.5L572.8 179L672.4 184.6L678.3 189L690 188.6L707 188.2L742 185.6L748 180.6L778.7 180.6L781.6 182.7L813.8 183.8L852 185L857.8 188.5L914.3 188.5L920 192.3L937.7 192.3L943.6 189.7L1012.4 189.7L1017.5 177.3L1043.9 177.3L1050.4 179.2L1085 178.7L1101 178.7L1107 175.8L1143.6 176.2L1149.4 171.8L1192 171.4L1197.7 175L1209.5 176.2L1216.8 178L1227 178.3L1232.9 181.2L1246.8 181.2" stroke="#ff0000" stroke-width="1"/><path d="M86 168.2L137.7 168.2L144.3 179.5L169 179.5L186 175.8L227.7 171.4L242.4 171.4L247.5 172.9L285 171.5L289.4 168.8L318.7 168.8L326 172.9L372.8 174.6L380.2 180.6L454.8 181.7L460.7 186L470 186L478 181.5L485 180.6L514.3 180.6L519.4 175.5L591.9 175.5L596.3 176.5L692.3 176.2L699.6 184.6L729 184.6L734.8 179.5L755.3 179.5L760.4 176.2L796.3 176.2L802 180.6L865 180.6L872.4 187.5L930.4 187.5L934.8 190.4L943.6 189.7L990.4 189.3L997 176.2L1019.7 176.2L1024 173.3L1079.7 173.3L1086 167.4L1108.4 167.4L1115 173.3L1137.7 173.3L1143.6 170.7L1164 170.7L1170 167.4L1198.5 167.4L1205 174.3L1212.4 174.3L1218.2 177.3L1244.6 177.3L1247.5 178.4" stroke="#0a8a0a" stroke-width="1"/></g><g clip-path="url(#c3)" fill="none"><path d="M89.5 252V256.3M96.5 252V264.1M103.5 252V265.1M110.5 252V265.1M117.5 252V265.1M124.5 252V261.9M131.5 252V258.5M137.5 252V259M144.5 252V265.1M151.5 252V265.1M158.5 252V256M165.5 252V256M172.5 252V259M179.5 252V256M186.5 252V257.8M193.5 252V259M200.5 252V256M207.5 252V258.5M214.5 252V256M221.5 252V254.9M228.5 252V257.8M234.5 252V261M241.5 252V254.9M248.5 252V257.8M255.5 252V254.9M262.5 252V257.8M269.5 252V256M276.5 252V253.1M283.5 252V253.1M290.5 252V256M297.5 252V256M380.5 252V258.5M387.5 252V256M394.5 252V256M401.5 252V256M408.5 252V259M415.5 252V261.9M422.5 252V260.3M436.5 252V261M442.5 252V261M449.5 252V263.3M456.5 252V264.4M463.5 252V260M470.5 252V260M477.5 252V257M484.5 252V261M491.5 252V257.8M498.5 252V257M505.5 252V255.1M512.5 252V254.1M519.5 252V257M526.5 252V257M533.5 252V255.1M567.5 252V260M574.5 252V255.1M581.5 252V255.1M602.5 252V260M609.5 252V261M616.5 252V254.1M643.5 252V257.8M650.5 252V261.5M657.5 252V261.5M664.5 252V261.5M671.5 252V263.6M678.5 252V260.7M685.5 252V260M692.5 252V258.5M699.5 252V260.7M706.5 252V264.7M713.5 252V258.5M720.5 252V256M775.5 252V261.5M782.5 252V257.8M789.5 252V257.8M803.5 252V260.5M810.5 252V257M817.5 252V255.5M831.5 252V260.7M838.5 252V263.6M844.5 252V263.6M851.5 252V264.7M858.5 252V261.5M865.5 252V261.5M872.5 252V264.7M879.5 252V264.7M886.5 252V261.5M893.5 252V261.5M900.5 252V264.7M907.5 252V264.7M914.5 252V264.7M921.5 252V261.5M928.5 252V261.5M935.5 252V264.7M942.5 252V261.5M948.5 252V264.7M955.5 252V260.7M962.5 252V260.7M969.5 252V260.7M976.5 252V257.8M983.5 252V257.8M990.5 252V255.5M997.5 252V257.8M1004.5 252V257.8M1011.5 252V258.5M1018.5 252V255.5M1025.5 252V258.5M1032.5 252V258.5M1039.5 252V264.7M1046.5 252V264.7M1052.5 252V258.5M1059.5 252V255.5M1066.5 252V255.5M1073.5 252V255.5M1080.5 252V255.5M1087.5 252V258.5M1094.5 252V260.7M1101.5 252V258.5M1108.5 252V255.5M1115.5 252V261.7M1122.5 252V255.5M1129.5 252V255.5M1136.5 252V255.5M1143.5 252V258.5M1150.5 252V255.5M1156.5 252V255.5M1163.5 252V254.9M1170.5 252V257.8M1177.5 252V255.5M1184.5 252V258.5M1191.5 252V258.5M1198.5 252V254.5M1205.5 252V261.5M1212.5 252V258.5M1219.5 252V261.5M1226.5 252V263.6M1233.5 252V261.5M1240.5 252V252.7M1247.5 252V255.5" stroke="#000" stroke-width="3" stroke-linecap="round"/><path d="M304.5 250.500V248.8M311.5 250.500V240M318.5 250.500V237.1M325.5 250.500V241M332.5 250.500V237.1M338.5 250.500V240M345.5 250.500V241M352.5 250.500V243.9M359.5 250.500V246.1M366.5 250.500V242.9M373.5 250.500V242.9M539.5 250.500V249.1M546.5 250.500V250.2M588.5 250.500V240.3M623.5 250.500V246.1M630.5 250.500V246.1M747.5 250.500V240M754.5 250.500V237.1M761.5 250.500V246.1M796.5 250.500V246.1M824.5 250.500V246.1" stroke="#fff" stroke-width="3" stroke-linecap="round"/><path d="M304.5 249.500V253.500M302.5 251.500h4M311.5 249.500V253.500M309.5 251.500h4M318.5 249.500V253.500M316.5 251.500h4M325.5 249.500V253.500M323.5 251.500h4M332.5 249.500V253.500M330.5 251.500h4M338.5 249.500V253.500M336.5 251.500h4M345.5 249.500V253.500M343.5 251.500h4M352.5 249.500V253.500M350.5 251.500h4M359.5 249.500V253.500M357.5 251.500h4M366.5 249.500V253.500M364.5 251.500h4M373.5 249.500V253.500M371.5 251.500h4M429.5 249.500V253.500M427.5 251.500h4M539.5 249.500V253.500M537.5 251.500h4M546.5 249.500V253.500M544.5 251.500h4M553.5 249.500V253.500M551.5 251.500h4M560.5 249.500V253.500M558.5 251.500h4M588.5 249.500V253.500M586.5 251.500h4M595.5 249.500V253.500M593.5 251.500h4M623.5 249.500V253.500M621.5 251.500h4M630.5 249.500V253.500M628.5 251.500h4M637.5 249.500V253.500M635.5 251.500h4M727.5 249.500V253.500M725.5 251.500h4M734.5 249.500V253.500M732.5 251.500h4M741.5 249.500V253.500M739.5 251.500h4M747.5 249.500V253.500M745.5 251.500h4M754.5 249.500V253.500M752.5 251.500h4M761.5 249.500V253.500M759.5 251.500h4M768.5 249.500V253.500M766.5 251.500h4M796.5 249.500V253.500M794.5 251.500h4M824.5 249.500V253.500M822.5 251.500h4" stroke="#000" stroke-width="1.3"/></g><g shape-rendering="crispEdges" stroke-width="1"><path d="M85.500 295V597M78 595.5H86M82 585.5H86M78 576.5H86M82 566.5H86M78 557.5H86M82 547.5H86M78 538.5H86M82 528.5H86M78 519.5H86M82 509.5H86M78 500.5H86M82 490.5H86M78 480.5H86M82 471.5H86M78 461.5H86M82 452.5H86M78 442.5H86M82 433.5H86M78 423.5H86M82 414.5H86M78 404.5H86M82 395.5H86M78 385.5H86M82 376.5H86M78 366.5H86M82 356.5H86M78 347.5H86M82 337.5H86M78 328.5H86M82 318.5H86M82 309.5H86M82 299.5H86" stroke="#fff"/><path d="M1313.500 295V597M1313 595.5H1322M1313 585.5H1317M1313 576.5H1322M1313 566.5H1317M1313 557.5H1322M1313 547.5H1317M1313 538.5H1322M1313 528.5H1317M1313 519.5H1322M1313 509.5H1317M1313 500.5H1322M1313 490.5H1317M1313 480.5H1322M1313 471.5H1317M1313 461.5H1322M1313 452.5H1317M1313 442.5H1322M1313 433.5H1317M1313 423.5H1322M1313 414.5H1317M1313 404.5H1322M1313 395.5H1317M1313 385.5H1322M1313 376.5H1317M1313 366.5H1322M1313 356.5H1317M1313 347.5H1322M1313 337.5H1317M1313 328.5H1322M1313 318.5H1317M1313 309.5H1317M1313 299.5H1317" stroke="#fff"/></g><g clip-path="url(#c4)"><g shape-rendering="crispEdges"><g fill="#7b9fcf"><rect x="94" y="361" width="5" height="9"/><rect x="101" y="368" width="5" height="17"/><rect x="108" y="385" width="5" height="5"/><rect x="115" y="392" width="5" height="18"/><rect x="142" y="384" width="5" height="6"/><rect x="149" y="391" width="5" height="6"/><rect x="163" y="381" width="5" height="4"/><rect x="184" y="385" width="5" height="2"/><rect x="205" y="373" width="5" height="8"/><rect x="226" y="368" width="5" height="1"/><rect x="232" y="371" width="5" height="6"/><rect x="246" y="361" width="5" height="8"/><rect x="267" y="358" width="5" height="2"/><rect x="274" y="359" width="5" height="2"/><rect x="288" y="360" width="5" height="1"/><rect x="323" y="346" width="5" height="4"/><rect x="343" y="334" width="5" height="5"/><rect x="350" y="338" width="5" height="1"/><rect x="357" y="342" width="5" height="5"/><rect x="371" y="346" width="5" height="2"/><rect x="378" y="347" width="5" height="9"/><rect x="392" y="354" width="5" height="3"/><rect x="399" y="358" width="5" height="3"/><rect x="413" y="358" width="5" height="4"/><rect x="420" y="361" width="5" height="3"/><rect x="434" y="356" width="5" height="10"/><rect x="440" y="369" width="5" height="5"/><rect x="447" y="373" width="5" height="8"/><rect x="454" y="373" width="5" height="15"/><rect x="482" y="375" width="5" height="3"/><rect x="489" y="377" width="5" height="1"/><rect x="496" y="380" width="5" height="1"/><rect x="524" y="363" width="5" height="1"/><rect x="551" y="355" width="5" height="4"/><rect x="558" y="358" width="5" height="2"/><rect x="565" y="362" width="5" height="2"/><rect x="593" y="347" width="5" height="10"/><rect x="600" y="362" width="5" height="1"/><rect x="607" y="361" width="5" height="3"/><rect x="628" y="358" width="5" height="2"/><rect x="635" y="357" width="5" height="5"/><rect x="641" y="362" width="5" height="2"/><rect x="648" y="364" width="5" height="6"/><rect x="655" y="369" width="5" height="6"/><rect x="662" y="373" width="5" height="7"/><rect x="669" y="381" width="5" height="6"/><rect x="683" y="385" width="5" height="3"/><rect x="704" y="389" width="5" height="12"/><rect x="732" y="378" width="5" height="4"/><rect x="759" y="366" width="5" height="10"/><rect x="766" y="376" width="5" height="2"/><rect x="773" y="376" width="5" height="13"/><rect x="787" y="384" width="5" height="1"/><rect x="801" y="378" width="5" height="7"/><rect x="815" y="382" width="5" height="2"/><rect x="829" y="380" width="5" height="4"/><rect x="836" y="380" width="5" height="5"/><rect x="842" y="392" width="5" height="12"/><rect x="849" y="403" width="5" height="14"/><rect x="863" y="418" width="5" height="1"/><rect x="870" y="427" width="5" height="11"/><rect x="877" y="429" width="5" height="14"/><rect x="884" y="435" width="5" height="9"/><rect x="891" y="442" width="5" height="6"/><rect x="898" y="443" width="5" height="20"/><rect x="905" y="471" width="5" height="6"/><rect x="912" y="507" width="5" height="11"/><rect x="926" y="504" width="5" height="6"/><rect x="933" y="519" width="5" height="13"/><rect x="940" y="523" width="5" height="10"/><rect x="946" y="545" width="5" height="9"/><rect x="960" y="555" width="5" height="2"/><rect x="967" y="552" width="5" height="4"/><rect x="981" y="555" width="5" height="2"/><rect x="1009" y="539" width="5" height="7"/><rect x="1016" y="544" width="5" height="3"/><rect x="1023" y="545" width="5" height="7"/><rect x="1030" y="555" width="5" height="2"/><rect x="1037" y="556" width="5" height="12"/><rect x="1044" y="565" width="5" height="13"/><rect x="1085" y="543" width="5" height="16"/><rect x="1092" y="558" width="5" height="7"/><rect x="1106" y="559" width="5" height="3"/><rect x="1113" y="564" width="5" height="8"/><rect x="1134" y="566" width="5" height="1"/><rect x="1141" y="564" width="5" height="5"/><rect x="1168" y="558" width="5" height="4"/><rect x="1182" y="560" width="5" height="4"/><rect x="1189" y="565" width="5" height="1"/><rect x="1196" y="564" width="5" height="2"/><rect x="1203" y="564" width="5" height="6"/><rect x="1210" y="570" width="5" height="1"/><rect x="1217" y="572" width="5" height="6"/><rect x="1224" y="578" width="5" height="7"/><rect x="1245" y="567" width="5" height="6"/><rect x="96" y="354" width="1" height="7"/><rect x="103" y="367" width="1" height="1"/><rect x="110" y="381" width="1" height="4"/><rect x="117" y="391" width="1" height="1"/><rect x="117" y="410" width="1" height="4"/><rect x="144" y="379" width="1" height="5"/><rect x="151" y="397" width="1" height="4"/><rect x="165" y="385" width="1" height="2"/><rect x="207" y="371" width="1" height="2"/><rect x="207" y="381" width="1" height="2"/><rect x="228" y="357" width="1" height="11"/><rect x="228" y="369" width="1" height="1"/><rect x="234" y="366" width="1" height="5"/><rect x="234" y="377" width="1" height="2"/><rect x="248" y="360" width="1" height="1"/><rect x="248" y="369" width="1" height="4"/><rect x="269" y="356" width="1" height="2"/><rect x="269" y="360" width="1" height="5"/><rect x="276" y="356" width="1" height="3"/><rect x="276" y="361" width="1" height="5"/><rect x="290" y="361" width="1" height="2"/><rect x="325" y="340" width="1" height="6"/><rect x="325" y="350" width="1" height="2"/><rect x="345" y="339" width="1" height="5"/><rect x="352" y="333" width="1" height="5"/><rect x="352" y="339" width="1" height="3"/><rect x="359" y="340" width="1" height="2"/><rect x="359" y="347" width="1" height="3"/><rect x="366" y="350" width="1" height="1"/><rect x="373" y="343" width="1" height="3"/><rect x="373" y="348" width="1" height="3"/><rect x="394" y="357" width="1" height="3"/><rect x="415" y="356" width="1" height="2"/><rect x="415" y="362" width="1" height="2"/><rect x="422" y="360" width="1" height="1"/><rect x="436" y="366" width="1" height="4"/><rect x="442" y="367" width="1" height="2"/><rect x="449" y="368" width="1" height="5"/><rect x="484" y="371" width="1" height="4"/><rect x="484" y="378" width="1" height="1"/><rect x="491" y="378" width="1" height="2"/><rect x="498" y="378" width="1" height="2"/><rect x="498" y="381" width="1" height="3"/><rect x="526" y="358" width="1" height="5"/><rect x="553" y="359" width="1" height="3"/><rect x="567" y="355" width="1" height="7"/><rect x="595" y="346" width="1" height="1"/><rect x="602" y="363" width="1" height="7"/><rect x="609" y="358" width="1" height="3"/><rect x="609" y="364" width="1" height="1"/><rect x="643" y="361" width="1" height="1"/><rect x="650" y="363" width="1" height="1"/><rect x="657" y="368" width="1" height="1"/><rect x="664" y="371" width="1" height="2"/><rect x="671" y="387" width="1" height="3"/><rect x="685" y="388" width="1" height="1"/><rect x="706" y="388" width="1" height="1"/><rect x="734" y="376" width="1" height="2"/><rect x="761" y="361" width="1" height="5"/><rect x="768" y="378" width="1" height="2"/><rect x="789" y="382" width="1" height="2"/><rect x="789" y="385" width="1" height="1"/><rect x="803" y="377" width="1" height="1"/><rect x="803" y="385" width="1" height="1"/><rect x="831" y="376" width="1" height="4"/><rect x="838" y="378" width="1" height="2"/><rect x="838" y="385" width="1" height="3"/><rect x="851" y="400" width="1" height="3"/><rect x="865" y="417" width="1" height="1"/><rect x="865" y="419" width="1" height="7"/><rect x="872" y="424" width="1" height="3"/><rect x="879" y="428" width="1" height="1"/><rect x="879" y="443" width="1" height="7"/><rect x="886" y="431" width="1" height="4"/><rect x="886" y="444" width="1" height="1"/><rect x="893" y="439" width="1" height="3"/><rect x="893" y="448" width="1" height="1"/><rect x="907" y="468" width="1" height="3"/><rect x="907" y="477" width="1" height="6"/><rect x="914" y="495" width="1" height="12"/><rect x="928" y="496" width="1" height="8"/><rect x="928" y="510" width="1" height="5"/><rect x="935" y="517" width="1" height="2"/><rect x="935" y="532" width="1" height="6"/><rect x="942" y="511" width="1" height="12"/><rect x="942" y="533" width="1" height="3"/><rect x="948" y="554" width="1" height="3"/><rect x="962" y="544" width="1" height="11"/><rect x="969" y="550" width="1" height="2"/><rect x="1011" y="536" width="1" height="3"/><rect x="1018" y="547" width="1" height="9"/><rect x="1025" y="543" width="1" height="2"/><rect x="1032" y="552" width="1" height="3"/><rect x="1039" y="553" width="1" height="3"/><rect x="1087" y="559" width="1" height="6"/><rect x="1094" y="555" width="1" height="3"/><rect x="1108" y="562" width="1" height="4"/><rect x="1136" y="567" width="1" height="2"/><rect x="1198" y="566" width="1" height="1"/><rect x="1212" y="568" width="1" height="2"/><rect x="1226" y="575" width="1" height="3"/><rect x="1247" y="563" width="1" height="4"/><rect x="1247" y="573" width="1" height="1"/></g><g fill="#dadada"><rect x="170" y="383" width="5" height="2"/><rect x="281" y="360" width="5" height="2"/><rect x="295" y="359" width="5" height="1"/><rect x="302" y="359" width="5" height="1"/><rect x="336" y="328" width="5" height="7"/><rect x="385" y="352" width="5" height="2"/><rect x="406" y="360" width="5" height="2"/><rect x="468" y="376" width="5" height="2"/><rect x="517" y="359" width="5" height="1"/><rect x="544" y="354" width="5" height="1"/><rect x="621" y="357" width="5" height="2"/><rect x="690" y="386" width="5" height="2"/><rect x="697" y="384" width="5" height="2"/><rect x="718" y="384" width="5" height="3"/><rect x="739" y="380" width="5" height="1"/><rect x="822" y="381" width="5" height="1"/><rect x="919" y="507" width="5" height="2"/><rect x="953" y="543" width="5" height="4"/><rect x="974" y="549" width="5" height="2"/><rect x="995" y="538" width="5" height="2"/><rect x="1050" y="572" width="5" height="2"/><rect x="1064" y="560" width="5" height="2"/><rect x="1078" y="545" width="5" height="2"/><rect x="1099" y="560" width="5" height="1"/><rect x="1127" y="564" width="5" height="3"/><rect x="1161" y="553" width="5" height="2"/><rect x="1175" y="560" width="5" height="1"/><rect x="1231" y="580" width="5" height="1"/><rect x="89" y="357" width="1" height="1"/><rect x="89" y="367" width="1" height="1"/><rect x="124" y="386" width="1" height="10"/><rect x="124" y="405" width="1" height="3"/><rect x="131" y="384" width="1" height="4"/><rect x="131" y="394" width="1" height="1"/><rect x="137" y="375" width="1" height="9"/><rect x="137" y="388" width="1" height="3"/><rect x="158" y="376" width="1" height="8"/><rect x="158" y="398" width="1" height="4"/><rect x="179" y="383" width="1" height="1"/><rect x="179" y="387" width="1" height="7"/><rect x="200" y="371" width="1" height="4"/><rect x="214" y="380" width="1" height="2"/><rect x="221" y="365" width="1" height="1"/><rect x="262" y="348" width="1" height="11"/><rect x="283" y="359" width="1" height="1"/><rect x="283" y="362" width="1" height="2"/><rect x="297" y="360" width="1" height="2"/><rect x="318" y="343" width="1" height="2"/><rect x="332" y="348" width="1" height="1"/><rect x="338" y="321" width="1" height="7"/><rect x="408" y="355" width="1" height="5"/><rect x="429" y="365" width="1" height="1"/><rect x="470" y="374" width="1" height="2"/><rect x="477" y="373" width="1" height="2"/><rect x="512" y="355" width="1" height="7"/><rect x="519" y="357" width="1" height="2"/><rect x="519" y="360" width="1" height="2"/><rect x="539" y="363" width="1" height="1"/><rect x="546" y="355" width="1" height="1"/><rect x="588" y="340" width="1" height="5"/><rect x="616" y="360" width="1" height="1"/><rect x="623" y="359" width="1" height="3"/><rect x="699" y="381" width="1" height="3"/><rect x="713" y="399" width="1" height="3"/><rect x="720" y="381" width="1" height="3"/><rect x="727" y="388" width="1" height="2"/><rect x="741" y="381" width="1" height="3"/><rect x="747" y="374" width="1" height="1"/><rect x="754" y="366" width="1" height="2"/><rect x="754" y="376" width="1" height="1"/><rect x="782" y="379" width="1" height="3"/><rect x="782" y="387" width="1" height="7"/><rect x="796" y="386" width="1" height="4"/><rect x="810" y="380" width="1" height="1"/><rect x="824" y="382" width="1" height="2"/><rect x="858" y="408" width="1" height="3"/><rect x="858" y="420" width="1" height="8"/><rect x="921" y="485" width="1" height="22"/><rect x="921" y="509" width="1" height="4"/><rect x="955" y="542" width="1" height="1"/><rect x="955" y="547" width="1" height="6"/><rect x="976" y="547" width="1" height="2"/><rect x="976" y="551" width="1" height="1"/><rect x="990" y="549" width="1" height="3"/><rect x="997" y="523" width="1" height="15"/><rect x="997" y="540" width="1" height="6"/><rect x="1004" y="537" width="1" height="1"/><rect x="1059" y="555" width="1" height="9"/><rect x="1066" y="559" width="1" height="1"/><rect x="1066" y="562" width="1" height="6"/><rect x="1073" y="557" width="1" height="1"/><rect x="1080" y="542" width="1" height="3"/><rect x="1080" y="547" width="1" height="3"/><rect x="1101" y="556" width="1" height="4"/><rect x="1101" y="561" width="1" height="1"/><rect x="1156" y="564" width="1" height="1"/><rect x="1163" y="551" width="1" height="2"/><rect x="1163" y="555" width="1" height="4"/><rect x="1177" y="556" width="1" height="4"/><rect x="1177" y="561" width="1" height="3"/><rect x="1233" y="581" width="1" height="1"/></g><g fill="#282828" stroke-width="1"><rect x="87.5" y="358.5" width="4" height="8" stroke="#dadada"/><rect x="122.5" y="396.5" width="4" height="8" stroke="#dadada"/><rect x="129.5" y="388.5" width="4" height="5" stroke="#dadada"/><rect x="135.5" y="384.5" width="4" height="3" stroke="#dadada"/><rect x="156.5" y="384.5" width="4" height="13" stroke="#dadada"/><rect x="177.5" y="384.5" width="4" height="2" stroke="#dadada"/><rect x="191.5" y="383.5" width="4" height="1" stroke="#dadada"/><rect x="198.5" y="375.5" width="4" height="6" stroke="#dadada"/><rect x="212.5" y="373.5" width="4" height="6" stroke="#dadada"/><rect x="219.5" y="366.5" width="4" height="10" stroke="#dadada"/><rect x="239.5" y="362.5" width="4" height="14" stroke="#dadada"/><rect x="253.5" y="362.5" width="4" height="9" stroke="#dadada"/><rect x="260.5" y="359.5" width="4" height="4" stroke="#dadada"/><rect x="309.5" y="350.5" width="4" height="8" stroke="#dadada"/><rect x="316.5" y="345.5" width="4" height="5" stroke="#dadada"/><rect x="330.5" y="337.5" width="4" height="10" stroke="#dadada"/><rect x="364.5" y="347.5" width="4" height="2" stroke="#7b9fcf"/><rect x="427.5" y="356.5" width="4" height="8" stroke="#dadada"/><rect x="461.5" y="377.5" width="4" height="11" stroke="#dadada"/><rect x="475.5" y="375.5" width="4" height="2" stroke="#dadada"/><rect x="503.5" y="369.5" width="4" height="13" stroke="#dadada"/><rect x="510.5" y="362.5" width="4" height="4" stroke="#dadada"/><rect x="531.5" y="362.5" width="4" height="3" stroke="#dadada"/><rect x="537.5" y="355.5" width="4" height="7" stroke="#dadada"/><rect x="572.5" y="361.5" width="4" height="3" stroke="#dadada"/><rect x="579.5" y="361.5" width="4" height="2" stroke="#dadada"/><rect x="586.5" y="345.5" width="4" height="15" stroke="#dadada"/><rect x="614.5" y="361.5" width="4" height="8" stroke="#dadada"/><rect x="676.5" y="387.5" width="4" height="2" stroke="#dadada"/><rect x="711.5" y="386.5" width="4" height="12" stroke="#dadada"/><rect x="725.5" y="379.5" width="4" height="8" stroke="#dadada"/><rect x="745.5" y="375.5" width="4" height="5" stroke="#dadada"/><rect x="752.5" y="368.5" width="4" height="7" stroke="#dadada"/><rect x="780.5" y="382.5" width="4" height="4" stroke="#dadada"/><rect x="794.5" y="378.5" width="4" height="7" stroke="#dadada"/><rect x="808.5" y="381.5" width="4" height="2" stroke="#dadada"/><rect x="856.5" y="411.5" width="4" height="8" stroke="#dadada"/><rect x="988.5" y="542.5" width="4" height="6" stroke="#dadada"/><rect x="1002.5" y="538.5" width="4" height="5" stroke="#dadada"/><rect x="1057.5" y="564.5" width="4" height="6" stroke="#dadada"/><rect x="1071.5" y="551.5" width="4" height="5" stroke="#dadada"/><rect x="1120.5" y="568.5" width="4" height="2" stroke="#dadada"/><rect x="1148.5" y="565.5" width="4" height="3" stroke="#dadada"/><rect x="1154.5" y="555.5" width="4" height="8" stroke="#dadada"/><rect x="1238.5" y="569.5" width="4" height="8" stroke="#dadada"/></g></g><path d="M89 361h2v1h1v1h-1v1h-2v-1h-1v-1h1zM96 376h2v1h1v1h-1v1h-2v-1h-1v-1h1zM103 396h2v1h1v1h-1v1h-2v-1h-1v-1h1zM110 398h2v1h1v1h-1v1h-2v-1h-1v-1h1zM117 421h2v1h1v1h-1v1h-2v-1h-1v-1h1zM124 399h2v1h1v1h-1v1h-2v-1h-1v-1h1zM131 389h2v1h1v1h-1v1h-2v-1h-1v-1h1zM137 386h2v1h1v1h-1v1h-2v-1h-1v-1h1zM144 396h2v1h1v1h-1v1h-2v-1h-1v-1h1zM151 404h2v1h1v1h-1v1h-2v-1h-1v-1h1zM158 385h2v1h1v1h-1v1h-2v-1h-1v-1h1zM165 387h2v1h1v1h-1v1h-2v-1h-1v-1h1zM172 388h2v1h1v1h-1v1h-2v-1h-1v-1h1zM179 389h2v1h1v1h-1v1h-2v-1h-1v-1h1zM186 386h2v1h1v1h-1v1h-2v-1h-1v-1h1zM193 384h2v1h1v1h-1v1h-2v-1h-1v-1h1zM200 374h2v1h1v1h-1v1h-2v-1h-1v-1h1zM207 383h2v1h1v1h-1v1h-2v-1h-1v-1h1zM214 375h2v1h1v1h-1v1h-2v-1h-1v-1h1zM221 366h2v1h1v1h-1v1h-2v-1h-1v-1h1zM228 372h2v1h1v1h-1v1h-2v-1h-1v-1h1zM234 383h2v1h1v1h-1v1h-2v-1h-1v-1h1zM241 363h2v1h1v1h-1v1h-2v-1h-1v-1h1zM248 373h2v1h1v1h-1v1h-2v-1h-1v-1h1zM255 365h2v1h1v1h-1v1h-2v-1h-1v-1h1zM262 362h2v1h1v1h-1v1h-2v-1h-1v-1h1zM269 364h2v1h1v1h-1v1h-2v-1h-1v-1h1zM276 365h2v1h1v1h-1v1h-2v-1h-1v-1h1zM283 364h2v1h1v1h-1v1h-2v-1h-1v-1h1zM290 363h2v1h1v1h-1v1h-2v-1h-1v-1h1zM297 362h2v1h1v1h-1v1h-2v-1h-1v-1h1zM304 361h2v1h1v1h-1v1h-2v-1h-1v-1h1zM311 349h2v1h1v1h-1v1h-2v-1h-1v-1h1zM318 343h2v1h1v1h-1v1h-2v-1h-1v-1h1zM325 352h2v1h1v1h-1v1h-2v-1h-1v-1h1zM332 337h2v1h1v1h-1v1h-2v-1h-1v-1h1zM338 334h2v1h1v1h-1v1h-2v-1h-1v-1h1zM345 344h2v1h1v1h-1v1h-2v-1h-1v-1h1zM352 343h2v1h1v1h-1v1h-2v-1h-1v-1h1zM359 353h2v1h1v1h-1v1h-2v-1h-1v-1h1zM366 351h2v1h1v1h-1v1h-2v-1h-1v-1h1zM373 351h2v1h1v1h-1v1h-2v-1h-1v-1h1zM380 361h2v1h1v1h-1v1h-2v-1h-1v-1h1zM387 354h2v1h1v1h-1v1h-2v-1h-1v-1h1zM394 360h2v1h1v1h-1v1h-2v-1h-1v-1h1zM401 364h2v1h1v1h-1v1h-2v-1h-1v-1h1zM408 361h2v1h1v1h-1v1h-2v-1h-1v-1h1zM415 364h2v1h1v1h-1v1h-2v-1h-1v-1h1zM422 366h2v1h1v1h-1v1h-2v-1h-1v-1h1zM429 356h2v1h1v1h-1v1h-2v-1h-1v-1h1zM436 371h2v1h1v1h-1v1h-2v-1h-1v-1h1zM442 379h2v1h1v1h-1v1h-2v-1h-1v-1h1zM449 387h2v1h1v1h-1v1h-2v-1h-1v-1h1zM456 394h2v1h1v1h-1v1h-2v-1h-1v-1h1zM463 378h2v1h1v1h-1v1h-2v-1h-1v-1h1zM470 378h2v1h1v1h-1v1h-2v-1h-1v-1h1zM477 377h2v1h1v1h-1v1h-2v-1h-1v-1h1zM484 381h2v1h1v1h-1v1h-2v-1h-1v-1h1zM491 380h2v1h1v1h-1v1h-2v-1h-1v-1h1zM498 384h2v1h1v1h-1v1h-2v-1h-1v-1h1zM505 368h2v1h1v1h-1v1h-2v-1h-1v-1h1zM512 360h2v1h1v1h-1v1h-2v-1h-1v-1h1zM519 362h2v1h1v1h-1v1h-2v-1h-1v-1h1zM526 368h2v1h1v1h-1v1h-2v-1h-1v-1h1zM533 364h2v1h1v1h-1v1h-2v-1h-1v-1h1zM539 355h2v1h1v1h-1v1h-2v-1h-1v-1h1zM546 356h2v1h1v1h-1v1h-2v-1h-1v-1h1zM553 362h2v1h1v1h-1v1h-2v-1h-1v-1h1zM560 363h2v1h1v1h-1v1h-2v-1h-1v-1h1zM567 366h2v1h1v1h-1v1h-2v-1h-1v-1h1zM574 362h2v1h1v1h-1v1h-2v-1h-1v-1h1zM581 361h2v1h1v1h-1v1h-2v-1h-1v-1h1zM588 343h2v1h1v1h-1v1h-2v-1h-1v-1h1zM595 361h2v1h1v1h-1v1h-2v-1h-1v-1h1zM602 370h2v1h1v1h-1v1h-2v-1h-1v-1h1zM609 369h2v1h1v1h-1v1h-2v-1h-1v-1h1zM616 363h2v1h1v1h-1v1h-2v-1h-1v-1h1zM623 358h2v1h1v1h-1v1h-2v-1h-1v-1h1zM630 359h2v1h1v1h-1v1h-2v-1h-1v-1h1zM637 365h2v1h1v1h-1v1h-2v-1h-1v-1h1zM643 366h2v1h1v1h-1v1h-2v-1h-1v-1h1zM650 374h2v1h1v1h-1v1h-2v-1h-1v-1h1zM657 378h2v1h1v1h-1v1h-2v-1h-1v-1h1zM664 384h2v1h1v1h-1v1h-2v-1h-1v-1h1zM671 392h2v1h1v1h-1v1h-2v-1h-1v-1h1zM678 390h2v1h1v1h-1v1h-2v-1h-1v-1h1zM685 390h2v1h1v1h-1v1h-2v-1h-1v-1h1zM692 388h2v1h1v1h-1v1h-2v-1h-1v-1h1zM699 387h2v1h1v1h-1v1h-2v-1h-1v-1h1zM706 407h2v1h1v1h-1v1h-2v-1h-1v-1h1zM713 387h2v1h1v1h-1v1h-2v-1h-1v-1h1zM720 384h2v1h1v1h-1v1h-2v-1h-1v-1h1zM727 381h2v1h1v1h-1v1h-2v-1h-1v-1h1zM734 385h2v1h1v1h-1v1h-2v-1h-1v-1h1zM741 384h2v1h1v1h-1v1h-2v-1h-1v-1h1zM747 376h2v1h1v1h-1v1h-2v-1h-1v-1h1zM754 367h2v1h1v1h-1v1h-2v-1h-1v-1h1zM761 379h2v1h1v1h-1v1h-2v-1h-1v-1h1zM768 380h2v1h1v1h-1v1h-2v-1h-1v-1h1zM775 396h2v1h1v1h-1v1h-2v-1h-1v-1h1zM782 385h2v1h1v1h-1v1h-2v-1h-1v-1h1zM789 388h2v1h1v1h-1v1h-2v-1h-1v-1h1zM796 380h2v1h1v1h-1v1h-2v-1h-1v-1h1zM803 389h2v1h1v1h-1v1h-2v-1h-1v-1h1zM810 383h2v1h1v1h-1v1h-2v-1h-1v-1h1zM817 385h2v1h1v1h-1v1h-2v-1h-1v-1h1zM824 383h2v1h1v1h-1v1h-2v-1h-1v-1h1zM831 385h2v1h1v1h-1v1h-2v-1h-1v-1h1zM838 388h2v1h1v1h-1v1h-2v-1h-1v-1h1zM844 413h2v1h1v1h-1v1h-2v-1h-1v-1h1zM851 426h2v1h1v1h-1v1h-2v-1h-1v-1h1zM858 417h2v1h1v1h-1v1h-2v-1h-1v-1h1zM865 426h2v1h1v1h-1v1h-2v-1h-1v-1h1zM872 449h2v1h1v1h-1v1h-2v-1h-1v-1h1zM879 453h2v1h1v1h-1v1h-2v-1h-1v-1h1zM886 449h2v1h1v1h-1v1h-2v-1h-1v-1h1zM893 453h2v1h1v1h-1v1h-2v-1h-1v-1h1zM900 472h2v1h1v1h-1v1h-2v-1h-1v-1h1zM907 488h2v1h1v1h-1v1h-2v-1h-1v-1h1zM914 538h2v1h1v1h-1v1h-2v-1h-1v-1h1zM921 516h2v1h1v1h-1v1h-2v-1h-1v-1h1zM928 516h2v1h1v1h-1v1h-2v-1h-1v-1h1zM935 545h2v1h1v1h-1v1h-2v-1h-1v-1h1zM942 542h2v1h1v1h-1v1h-2v-1h-1v-1h1zM948 568h2v1h1v1h-1v1h-2v-1h-1v-1h1zM955 553h2v1h1v1h-1v1h-2v-1h-1v-1h1zM962 561h2v1h1v1h-1v1h-2v-1h-1v-1h1zM969 560h2v1h1v1h-1v1h-2v-1h-1v-1h1zM976 552h2v1h1v1h-1v1h-2v-1h-1v-1h1zM983 558h2v1h1v1h-1v1h-2v-1h-1v-1h1zM990 540h2v1h1v1h-1v1h-2v-1h-1v-1h1zM997 540h2v1h1v1h-1v1h-2v-1h-1v-1h1zM1004 541h2v1h1v1h-1v1h-2v-1h-1v-1h1zM1011 552h2v1h1v1h-1v1h-2v-1h-1v-1h1zM1018 552h2v1h1v1h-1v1h-2v-1h-1v-1h1zM1025 556h2v1h1v1h-1v1h-2v-1h-1v-1h1zM1032 561h2v1h1v1h-1v1h-2v-1h-1v-1h1zM1039 575h2v1h1v1h-1v1h-2v-1h-1v-1h1zM1046 583h2v1h1v1h-1v1h-2v-1h-1v-1h1zM1052 575h2v1h1v1h-1v1h-2v-1h-1v-1h1zM1059 562h2v1h1v1h-1v1h-2v-1h-1v-1h1zM1066 560h2v1h1v1h-1v1h-2v-1h-1v-1h1zM1073 550h2v1h1v1h-1v1h-2v-1h-1v-1h1zM1080 545h2v1h1v1h-1v1h-2v-1h-1v-1h1zM1087 566h2v1h1v1h-1v1h-2v-1h-1v-1h1zM1094 572h2v1h1v1h-1v1h-2v-1h-1v-1h1zM1101 562h2v1h1v1h-1v1h-2v-1h-1v-1h1zM1108 566h2v1h1v1h-1v1h-2v-1h-1v-1h1zM1115 578h2v1h1v1h-1v1h-2v-1h-1v-1h1zM1122 570h2v1h1v1h-1v1h-2v-1h-1v-1h1zM1129 564h2v1h1v1h-1v1h-2v-1h-1v-1h1zM1136 569h2v1h1v1h-1v1h-2v-1h-1v-1h1zM1143 570h2v1h1v1h-1v1h-2v-1h-1v-1h1zM1150 565h2v1h1v1h-1v1h-2v-1h-1v-1h1zM1156 553h2v1h1v1h-1v1h-2v-1h-1v-1h1zM1163 553h2v1h1v1h-1v1h-2v-1h-1v-1h1zM1170 566h2v1h1v1h-1v1h-2v-1h-1v-1h1zM1177 564h2v1h1v1h-1v1h-2v-1h-1v-1h1zM1184 568h2v1h1v1h-1v1h-2v-1h-1v-1h1zM1191 567h2v1h1v1h-1v1h-2v-1h-1v-1h1zM1198 567h2v1h1v1h-1v1h-2v-1h-1v-1h1zM1205 572h2v1h1v1h-1v1h-2v-1h-1v-1h1zM1212 572h2v1h1v1h-1v1h-2v-1h-1v-1h1zM1219 581h2v1h1v1h-1v1h-2v-1h-1v-1h1zM1226 589h2v1h1v1h-1v1h-2v-1h-1v-1h1zM1233 582h2v1h1v1h-1v1h-2v-1h-1v-1h1zM1240 567h2v1h1v1h-1v1h-2v-1h-1v-1h1zM1247 574h2v1h1v1h-1v1h-2v-1h-1v-1h1z" fill="#006200" shape-rendering="crispEdges"/><path d="M89 351h2v1h1v1h-1v1h-2v-1h-1v-1h1zM96 365h2v1h1v1h-1v1h-2v-1h-1v-1h1zM103 384h2v1h1v1h-1v1h-2v-1h-1v-1h1zM110 387h2v1h1v1h-1v1h-2v-1h-1v-1h1zM117 408h2v1h1v1h-1v1h-2v-1h-1v-1h1zM124 385h2v1h1v1h-1v1h-2v-1h-1v-1h1zM131 377h2v1h1v1h-1v1h-2v-1h-1v-1h1zM137 373h2v1h1v1h-1v1h-2v-1h-1v-1h1zM144 384h2v1h1v1h-1v1h-2v-1h-1v-1h1zM151 395h2v1h1v1h-1v1h-2v-1h-1v-1h1zM158 374h2v1h1v1h-1v1h-2v-1h-1v-1h1zM165 377h2v1h1v1h-1v1h-2v-1h-1v-1h1zM172 379h2v1h1v1h-1v1h-2v-1h-1v-1h1zM179 380h2v1h1v1h-1v1h-2v-1h-1v-1h1zM186 382h2v1h1v1h-1v1h-2v-1h-1v-1h1zM193 379h2v1h1v1h-1v1h-2v-1h-1v-1h1zM200 368h2v1h1v1h-1v1h-2v-1h-1v-1h1zM207 377h2v1h1v1h-1v1h-2v-1h-1v-1h1zM214 367h2v1h1v1h-1v1h-2v-1h-1v-1h1zM221 358h2v1h1v1h-1v1h-2v-1h-1v-1h1zM228 363h2v1h1v1h-1v1h-2v-1h-1v-1h1zM234 374h2v1h1v1h-1v1h-2v-1h-1v-1h1zM241 353h2v1h1v1h-1v1h-2v-1h-1v-1h1zM248 363h2v1h1v1h-1v1h-2v-1h-1v-1h1zM255 355h2v1h1v1h-1v1h-2v-1h-1v-1h1zM262 351h2v1h1v1h-1v1h-2v-1h-1v-1h1zM269 354h2v1h1v1h-1v1h-2v-1h-1v-1h1zM276 357h2v1h1v1h-1v1h-2v-1h-1v-1h1zM283 356h2v1h1v1h-1v1h-2v-1h-1v-1h1zM290 357h2v1h1v1h-1v1h-2v-1h-1v-1h1zM297 357h2v1h1v1h-1v1h-2v-1h-1v-1h1zM304 357h2v1h1v1h-1v1h-2v-1h-1v-1h1zM311 344h2v1h1v1h-1v1h-2v-1h-1v-1h1zM318 338h2v1h1v1h-1v1h-2v-1h-1v-1h1zM325 346h2v1h1v1h-1v1h-2v-1h-1v-1h1zM332 330h2v1h1v1h-1v1h-2v-1h-1v-1h1zM338 326h2v1h1v1h-1v1h-2v-1h-1v-1h1zM345 334h2v1h1v1h-1v1h-2v-1h-1v-1h1zM352 334h2v1h1v1h-1v1h-2v-1h-1v-1h1zM359 344h2v1h1v1h-1v1h-2v-1h-1v-1h1zM366 343h2v1h1v1h-1v1h-2v-1h-1v-1h1zM373 344h2v1h1v1h-1v1h-2v-1h-1v-1h1zM380 354h2v1h1v1h-1v1h-2v-1h-1v-1h1zM387 348h2v1h1v1h-1v1h-2v-1h-1v-1h1zM394 354h2v1h1v1h-1v1h-2v-1h-1v-1h1zM401 359h2v1h1v1h-1v1h-2v-1h-1v-1h1zM408 356h2v1h1v1h-1v1h-2v-1h-1v-1h1zM415 359h2v1h1v1h-1v1h-2v-1h-1v-1h1zM422 362h2v1h1v1h-1v1h-2v-1h-1v-1h1zM429 351h2v1h1v1h-1v1h-2v-1h-1v-1h1zM436 364h2v1h1v1h-1v1h-2v-1h-1v-1h1zM442 373h2v1h1v1h-1v1h-2v-1h-1v-1h1zM449 379h2v1h1v1h-1v1h-2v-1h-1v-1h1zM456 385h2v1h1v1h-1v1h-2v-1h-1v-1h1zM463 370h2v1h1v1h-1v1h-2v-1h-1v-1h1zM470 369h2v1h1v1h-1v1h-2v-1h-1v-1h1zM477 369h2v1h1v1h-1v1h-2v-1h-1v-1h1zM484 375h2v1h1v1h-1v1h-2v-1h-1v-1h1zM491 376h2v1h1v1h-1v1h-2v-1h-1v-1h1zM498 379h2v1h1v1h-1v1h-2v-1h-1v-1h1zM505 362h2v1h1v1h-1v1h-2v-1h-1v-1h1zM512 353h2v1h1v1h-1v1h-2v-1h-1v-1h1zM519 354h2v1h1v1h-1v1h-2v-1h-1v-1h1zM526 361h2v1h1v1h-1v1h-2v-1h-1v-1h1zM533 358h2v1h1v1h-1v1h-2v-1h-1v-1h1zM539 349h2v1h1v1h-1v1h-2v-1h-1v-1h1zM546 351h2v1h1v1h-1v1h-2v-1h-1v-1h1zM553 356h2v1h1v1h-1v1h-2v-1h-1v-1h1zM560 358h2v1h1v1h-1v1h-2v-1h-1v-1h1zM567 361h2v1h1v1h-1v1h-2v-1h-1v-1h1zM574 357h2v1h1v1h-1v1h-2v-1h-1v-1h1zM581 357h2v1h1v1h-1v1h-2v-1h-1v-1h1zM588 336h2v1h1v1h-1v1h-2v-1h-1v-1h1zM595 354h2v1h1v1h-1v1h-2v-1h-1v-1h1zM602 362h2v1h1v1h-1v1h-2v-1h-1v-1h1zM609 360h2v1h1v1h-1v1h-2v-1h-1v-1h1zM616 356h2v1h1v1h-1v1h-2v-1h-1v-1h1zM623 352h2v1h1v1h-1v1h-2v-1h-1v-1h1zM630 354h2v1h1v1h-1v1h-2v-1h-1v-1h1zM637 360h2v1h1v1h-1v1h-2v-1h-1v-1h1zM643 362h2v1h1v1h-1v1h-2v-1h-1v-1h1zM650 369h2v1h1v1h-1v1h-2v-1h-1v-1h1zM657 374h2v1h1v1h-1v1h-2v-1h-1v-1h1zM664 378h2v1h1v1h-1v1h-2v-1h-1v-1h1zM671 385h2v1h1v1h-1v1h-2v-1h-1v-1h1zM678 383h2v1h1v1h-1v1h-2v-1h-1v-1h1zM685 384h2v1h1v1h-1v1h-2v-1h-1v-1h1zM692 382h2v1h1v1h-1v1h-2v-1h-1v-1h1zM699 382h2v1h1v1h-1v1h-2v-1h-1v-1h1zM706 401h2v1h1v1h-1v1h-2v-1h-1v-1h1zM713 379h2v1h1v1h-1v1h-2v-1h-1v-1h1zM720 376h2v1h1v1h-1v1h-2v-1h-1v-1h1zM727 372h2v1h1v1h-1v1h-2v-1h-1v-1h1zM734 378h2v1h1v1h-1v1h-2v-1h-1v-1h1zM741 378h2v1h1v1h-1v1h-2v-1h-1v-1h1zM747 370h2v1h1v1h-1v1h-2v-1h-1v-1h1zM754 362h2v1h1v1h-1v1h-2v-1h-1v-1h1zM761 372h2v1h1v1h-1v1h-2v-1h-1v-1h1zM768 373h2v1h1v1h-1v1h-2v-1h-1v-1h1zM775 387h2v1h1v1h-1v1h-2v-1h-1v-1h1zM782 376h2v1h1v1h-1v1h-2v-1h-1v-1h1zM789 380h2v1h1v1h-1v1h-2v-1h-1v-1h1zM796 371h2v1h1v1h-1v1h-2v-1h-1v-1h1zM803 381h2v1h1v1h-1v1h-2v-1h-1v-1h1zM810 377h2v1h1v1h-1v1h-2v-1h-1v-1h1zM817 379h2v1h1v1h-1v1h-2v-1h-1v-1h1zM824 378h2v1h1v1h-1v1h-2v-1h-1v-1h1zM831 380h2v1h1v1h-1v1h-2v-1h-1v-1h1zM838 382h2v1h1v1h-1v1h-2v-1h-1v-1h1zM844 406h2v1h1v1h-1v1h-2v-1h-1v-1h1zM851 417h2v1h1v1h-1v1h-2v-1h-1v-1h1zM858 405h2v1h1v1h-1v1h-2v-1h-1v-1h1zM865 414h2v1h1v1h-1v1h-2v-1h-1v-1h1zM872 437h2v1h1v1h-1v1h-2v-1h-1v-1h1zM879 440h2v1h1v1h-1v1h-2v-1h-1v-1h1zM886 437h2v1h1v1h-1v1h-2v-1h-1v-1h1zM893 442h2v1h1v1h-1v1h-2v-1h-1v-1h1zM900 460h2v1h1v1h-1v1h-2v-1h-1v-1h1zM907 477h2v1h1v1h-1v1h-2v-1h-1v-1h1zM914 525h2v1h1v1h-1v1h-2v-1h-1v-1h1zM921 500h2v1h1v1h-1v1h-2v-1h-1v-1h1zM928 500h2v1h1v1h-1v1h-2v-1h-1v-1h1zM935 528h2v1h1v1h-1v1h-2v-1h-1v-1h1zM942 524h2v1h1v1h-1v1h-2v-1h-1v-1h1zM948 553h2v1h1v1h-1v1h-2v-1h-1v-1h1zM955 539h2v1h1v1h-1v1h-2v-1h-1v-1h1zM962 549h2v1h1v1h-1v1h-2v-1h-1v-1h1zM969 551h2v1h1v1h-1v1h-2v-1h-1v-1h1zM976 544h2v1h1v1h-1v1h-2v-1h-1v-1h1zM983 552h2v1h1v1h-1v1h-2v-1h-1v-1h1zM990 534h2v1h1v1h-1v1h-2v-1h-1v-1h1zM997 531h2v1h1v1h-1v1h-2v-1h-1v-1h1zM1004 532h2v1h1v1h-1v1h-2v-1h-1v-1h1zM1011 542h2v1h1v1h-1v1h-2v-1h-1v-1h1zM1018 542h2v1h1v1h-1v1h-2v-1h-1v-1h1zM1025 549h2v1h1v1h-1v1h-2v-1h-1v-1h1zM1032 554h2v1h1v1h-1v1h-2v-1h-1v-1h1zM1039 567h2v1h1v1h-1v1h-2v-1h-1v-1h1zM1046 576h2v1h1v1h-1v1h-2v-1h-1v-1h1zM1052 568h2v1h1v1h-1v1h-2v-1h-1v-1h1zM1059 553h2v1h1v1h-1v1h-2v-1h-1v-1h1zM1066 552h2v1h1v1h-1v1h-2v-1h-1v-1h1zM1073 543h2v1h1v1h-1v1h-2v-1h-1v-1h1zM1080 537h2v1h1v1h-1v1h-2v-1h-1v-1h1zM1087 558h2v1h1v1h-1v1h-2v-1h-1v-1h1zM1094 562h2v1h1v1h-1v1h-2v-1h-1v-1h1zM1101 553h2v1h1v1h-1v1h-2v-1h-1v-1h1zM1108 556h2v1h1v1h-1v1h-2v-1h-1v-1h1zM1115 570h2v1h1v1h-1v1h-2v-1h-1v-1h1zM1122 565h2v1h1v1h-1v1h-2v-1h-1v-1h1zM1129 558h2v1h1v1h-1v1h-2v-1h-1v-1h1zM1136 565h2v1h1v1h-1v1h-2v-1h-1v-1h1zM1143 566h2v1h1v1h-1v1h-2v-1h-1v-1h1zM1150 561h2v1h1v1h-1v1h-2v-1h-1v-1h1zM1156 548h2v1h1v1h-1v1h-2v-1h-1v-1h1zM1163 547h2v1h1v1h-1v1h-2v-1h-1v-1h1zM1170 561h2v1h1v1h-1v1h-2v-1h-1v-1h1zM1177 558h2v1h1v1h-1v1h-2v-1h-1v-1h1zM1184 563h2v1h1v1h-1v1h-2v-1h-1v-1h1zM1191 563h2v1h1v1h-1v1h-2v-1h-1v-1h1zM1198 563h2v1h1v1h-1v1h-2v-1h-1v-1h1zM1205 569h2v1h1v1h-1v1h-2v-1h-1v-1h1zM1212 569h2v1h1v1h-1v1h-2v-1h-1v-1h1zM1219 577h2v1h1v1h-1v1h-2v-1h-1v-1h1zM1226 583h2v1h1v1h-1v1h-2v-1h-1v-1h1zM1233 577h2v1h1v1h-1v1h-2v-1h-1v-1h1zM1240 561h2v1h1v1h-1v1h-2v-1h-1v-1h1zM1247 567h2v1h1v1h-1v1h-2v-1h-1v-1h1z" fill="#ff0000" shape-rendering="crispEdges"/></g><g clip-path="url(#c4)" fill="#fff" font-size="12.4" font-family="Liberation Sans"><text x="50.500" y="600.9" textLength="23.500" lengthAdjust="spacingAndGlyphs">0.08</text><text x="1336" y="600.9" textLength="23.500" lengthAdjust="spacingAndGlyphs">0.08</text><text x="50.500" y="581.83" textLength="23.500" lengthAdjust="spacingAndGlyphs">0.09</text><text x="1336" y="581.83" textLength="23.500" lengthAdjust="spacingAndGlyphs">0.09</text><text x="50.500" y="562.75" textLength="23.500" lengthAdjust="spacingAndGlyphs">0.10</text><text x="1336" y="562.75" textLength="23.500" lengthAdjust="spacingAndGlyphs">0.10</text><text x="50.500" y="543.67" textLength="23.500" lengthAdjust="spacingAndGlyphs">0.11</text><text x="1336" y="543.67" textLength="23.500" lengthAdjust="spacingAndGlyphs">0.11</text><text x="50.500" y="524.6" textLength="23.500" lengthAdjust="spacingAndGlyphs">0.12</text><text x="1336" y="524.6" textLength="23.500" lengthAdjust="spacingAndGlyphs">0.12</text><text x="50.500" y="505.52" textLength="23.500" lengthAdjust="spacingAndGlyphs">0.13</text><text x="1336" y="505.52" textLength="23.500" lengthAdjust="spacingAndGlyphs">0.13</text><text x="50.500" y="486.45" textLength="23.500" lengthAdjust="spacingAndGlyphs">0.14</text><text x="1336" y="486.45" textLength="23.500" lengthAdjust="spacingAndGlyphs">0.14</text><text x="50.500" y="467.38" textLength="23.500" lengthAdjust="spacingAndGlyphs">0.15</text><text x="1336" y="467.38" textLength="23.500" lengthAdjust="spacingAndGlyphs">0.15</text><text x="50.500" y="448.3" textLength="23.500" lengthAdjust="spacingAndGlyphs">0.16</text><text x="1336" y="448.3" textLength="23.500" lengthAdjust="spacingAndGlyphs">0.16</text><text x="50.500" y="429.23" textLength="23.500" lengthAdjust="spacingAndGlyphs">0.17</text><text x="1336" y="429.23" textLength="23.500" lengthAdjust="spacingAndGlyphs">0.17</text><text x="50.500" y="410.15" textLength="23.500" lengthAdjust="spacingAndGlyphs">0.18</text><text x="1336" y="410.15" textLength="23.500" lengthAdjust="spacingAndGlyphs">0.18</text><text x="50.500" y="391.08" textLength="23.500" lengthAdjust="spacingAndGlyphs">0.19</text><text x="1336" y="391.08" textLength="23.500" lengthAdjust="spacingAndGlyphs">0.19</text><text x="50.500" y="372" textLength="23.500" lengthAdjust="spacingAndGlyphs">0.20</text><text x="1336" y="372" textLength="23.500" lengthAdjust="spacingAndGlyphs">0.20</text><text x="50.500" y="352.93" textLength="23.500" lengthAdjust="spacingAndGlyphs">0.21</text><text x="1336" y="352.93" textLength="23.500" lengthAdjust="spacingAndGlyphs">0.21</text><text x="50.500" y="333.85" textLength="23.500" lengthAdjust="spacingAndGlyphs">0.22</text><text x="1336" y="333.85" textLength="23.500" lengthAdjust="spacingAndGlyphs">0.22</text></g><g font-size="12.4" font-family="Liberation Sans"><text x="67.200" y="123.8" fill="#15151f">0</text><text x="1352.700" y="123.8" fill="#fffff4">0</text><text x="67.200" y="184.8" fill="#15151f">0</text><text x="1352.700" y="184.8" fill="#fffff4">0</text><text x="67.200" y="256.8" fill="#15151f">0</text><text x="1352.700" y="256.8" fill="#fffff4">0</text></g><rect x="37.5" y="563.500" width="42" height="17" fill="#000" stroke="#fff" stroke-width="1" shape-rendering="crispEdges"/><text x="39.5" y="577" fill="#ee0000" font-size="12.2" font-family="Liberation Sans" textLength="38.500" lengthAdjust="spacingAndGlyphs">0.09170</text><rect x="1317.5" y="563.500" width="42" height="17" fill="#000" stroke="#fff" stroke-width="1" shape-rendering="crispEdges"/><text x="1319.5" y="577" fill="#ee0000" font-size="12.2" font-family="Liberation Sans" textLength="38.500" lengthAdjust="spacingAndGlyphs">0.09170</text><rect x="35" y="597" width="1329" height="1" fill="#8c8c8c"/><rect x="35" y="598" width="1329" height="21" fill="#000"/><rect x="35" y="619" width="1329" height="1" fill="#7f7f7f"/><rect x="86" y="598" width="89" height="21" fill="url(#hr)" shape-rendering="crispEdges"/><path d="M176 599.500H231M176 607.500H231M176 615.500H231" stroke="#ffff00" stroke-width="1" shape-rendering="crispEdges"/><rect x="232" y="598" width="19" height="21" fill="url(#hr)" shape-rendering="crispEdges"/><path d="M252 599.500H307M252 607.500H307M252 615.500H307" stroke="#ffff00" stroke-width="1" shape-rendering="crispEdges"/><rect x="308" y="598" width="47" height="21" fill="url(#hg)" shape-rendering="crispEdges"/><path d="M356 599.500H376M356 607.500H376M356 615.500H376" stroke="#ffff00" stroke-width="1" shape-rendering="crispEdges"/><rect x="377" y="598" width="48" height="21" fill="url(#hr)" shape-rendering="crispEdges"/><path d="M426 599.500H432M426 607.500H432M426 615.500H432" stroke="#ffff00" stroke-width="1" shape-rendering="crispEdges"/><rect x="433" y="598" width="68" height="21" fill="url(#hr)" shape-rendering="crispEdges"/><path d="M502 599.500H584M502 607.500H584M502 615.500H584" stroke="#ffff00" stroke-width="1" shape-rendering="crispEdges"/><rect x="585" y="598" width="6" height="21" fill="url(#hg)" shape-rendering="crispEdges"/><path d="M592 599.500H598M592 607.500H598M592 615.500H598" stroke="#ffff00" stroke-width="1" shape-rendering="crispEdges"/><rect x="599" y="598" width="20" height="21" fill="url(#hr)" shape-rendering="crispEdges"/><path d="M620 599.500H640M620 607.500H640M620 615.500H640" stroke="#ffff00" stroke-width="1" shape-rendering="crispEdges"/><rect x="641" y="598" width="82" height="21" fill="url(#hr)" shape-rendering="crispEdges"/><rect x="724" y="598" width="6" height="21" fill="url(#hg)" shape-rendering="crispEdges"/><path d="M731 599.500H737M731 607.500H737M731 615.500H737" stroke="#ffff00" stroke-width="1" shape-rendering="crispEdges"/><rect x="738" y="598" width="26" height="21" fill="url(#hg)" shape-rendering="crispEdges"/><path d="M765 599.500H771M765 607.500H771M765 615.500H771" stroke="#ffff00" stroke-width="1" shape-rendering="crispEdges"/><rect x="772" y="598" width="20" height="21" fill="url(#hr)" shape-rendering="crispEdges"/><path d="M793 599.500H799M793 607.500H799M793 615.500H799" stroke="#ffff00" stroke-width="1" shape-rendering="crispEdges"/><rect x="800" y="598" width="20" height="21" fill="url(#hr)" shape-rendering="crispEdges"/><path d="M821 599.500H827M821 607.500H827M821 615.500H827" stroke="#ffff00" stroke-width="1" shape-rendering="crispEdges"/><rect x="828" y="598" width="186" height="21" fill="url(#hr)" shape-rendering="crispEdges"/><path d="M1015 599.500H1042M1015 607.500H1042M1015 615.500H1042" stroke="#ffff00" stroke-width="1" shape-rendering="crispEdges"/><rect x="1043" y="598" width="12" height="21" fill="url(#hr)" shape-rendering="crispEdges"/><path d="M1056 599.500H1180M1056 607.500H1180M1056 615.500H1180" stroke="#ffff00" stroke-width="1" shape-rendering="crispEdges"/><rect x="1181" y="598" width="73" height="21" fill="url(#hr)" shape-rendering="crispEdges"/><g fill="#fff" font-size="16" font-family="Liberation Sans" text-anchor="middle"><text x="130.5" y="614">Bearish</text><text x="203.5" y="614">Neutral</text><text x="279.5" y="614">Neutral</text><text x="331.5" y="614">Bullish</text><text x="467" y="614">Bearish</text><text x="543" y="614">Neutral</text><text x="682" y="614">Bearish</text><text x="921" y="614">Bearish</text><text x="1118" y="614">Neutral</text><text x="1216" y="614">Bearish</text></g><rect x="35" y="620" width="1279" height="33" fill="#000"/><path d="M85.500 620V651M103.5 620V635M137.5 620V635M172.5 620V635M207.5 620V635M241.5 620V635M276.5 620V635M304.5 620V635M311.5 620V635M345.5 620V635M380.5 620V635M415.5 620V635M449.5 620V635M449.5 620V635M484.5 620V635M519.5 620V635M553.5 620V635M574.5 620V635M588.5 620V635M602.5 620V635M637.5 620V635M671.5 620V635M706.5 620V635M741.5 620V635M741.5 620V635M775.5 620V635M810.5 620V635M844.5 620V635M879.5 620V635M879.5 620V635M914.5 620V635M948.5 620V635M983.5 620V635M1018.5 620V635M1032.5 620V635M1052.5 620V635M1080.5 620V635M1108.5 620V635M1143.5 620V635M1170.5 620V635M1170.5 620V635M1205.5 620V635M1240.5 620V635M1274.5 620V635M1309.5 620V635M1309.5 620V635M144.5 635V651M304.5 635V651M449.5 635V651M588.5 635V651M741.5 635V651M879.5 635V651M1032.5 635V651M1170.5 635V651M1309.5 635V651" stroke="#fff" stroke-width="1" shape-rendering="crispEdges"/><path d="M85 619.500H1314M85 635.500H1314" stroke="#fff" stroke-width="1" shape-rendering="crispEdges"/><path d="M85 651.500H1314" stroke="#666" stroke-width="1" shape-rendering="crispEdges"/><clipPath id="cd"><rect x="85" y="620" width="1228" height="32"/></clipPath><g fill="#fff" font-size="11.9" font-family="Liberation Sans" clip-path="url(#cd)"><text x="105" y="631.8">23</text><text x="139" y="631.8">30</text><text x="146" y="647.7">October</text><text x="174" y="631.8">7</text><text x="209" y="631.8">14</text><text x="243" y="631.8">21</text><text x="278" y="631.8">28</text><text x="306" y="647.7">November</text><text x="313" y="631.8">4</text><text x="347" y="631.8">11</text><text x="382" y="631.8">18</text><text x="417" y="631.8">25</text><text x="451" y="647.7">December</text><text x="451" y="631.8">2</text><text x="486" y="631.8">9</text><text x="521" y="631.8">16</text><text x="555" y="631.8">23</text><text x="576" y="631.8">30</text><text x="590" y="647.7">2020</text><text x="604" y="631.8">6</text><text x="639" y="631.8">13</text><text x="673" y="631.8">20</text><text x="708" y="631.8">27</text><text x="743" y="647.7">February</text><text x="743" y="631.8">3</text><text x="777" y="631.8">10</text><text x="812" y="631.8">17</text><text x="846" y="631.8">24</text><text x="881" y="647.7">March</text><text x="881" y="631.8">2</text><text x="916" y="631.8">9</text><text x="950" y="631.8">16</text><text x="985" y="631.8">23</text><text x="1020" y="631.8">30</text><text x="1034" y="647.7">April</text><text x="1054" y="631.8">6</text><text x="1082" y="631.8">14</text><text x="1110" y="631.8">20</text><text x="1145" y="631.8">27</text><text x="1172" y="647.7">May</text><text x="1172" y="631.8">4</text><text x="1207" y="631.8">11</text><text x="1242" y="631.8">18</text><text x="1276" y="631.8">25</text><text x="1311" y="647.7">June</text></g><rect x="1314" y="620" width="50" height="33" fill="#e5e5e5"/><rect x="1314" y="620" width="50" height="1" fill="#a6a6a6"/><rect x="1314" y="652" width="50" height="1" fill="#f8f8f8"/><circle cx="1337.500" cy="635" r="8" fill="none" stroke="#ff1a1a" stroke-width="1.2"/><circle cx="1334.700" cy="632.300" r="1.350" fill="#ff1a1a"/><circle cx="1340.300" cy="632.300" r="1.350" fill="#ff1a1a"/><path d="M1332.800 639.300q4.700-6.400 9.400 0" fill="none" stroke="#ff1a1a" stroke-width="1.200"/></svg>
<div class="a" style="left:35px;top:653px;width:1329px;height:22px;background:#ebebeb"></div>
<div class="a" style="left:0;top:675px;width:35px;height:1px;background:#9c9c9c"></div>
<div class="a" style="left:35px;top:653px;width:1115px;height:20px;background:#f9f9f9;background-image:repeating-conic-gradient(#f1f1f1 0 25%,#fdfdfd 0 50%);background-size:2px 2px"></div>
<div class="a" style="left:35px;top:653px;width:17px;height:20px;background:#efefef;border:1px solid;border-color:#fff #7c7c7c #7c7c7c #fff"></div>
<div class="a" style="left:1133px;top:653px;width:17px;height:20px;background:#efefef;border:1px solid;border-color:#fff #7c7c7c #7c7c7c #fff"></div>
<div class="a" style="left:986px;top:653px;width:145px;height:20px;background:#f0f0f0;border:1px solid;border-color:#fff #7c7c7c #7c7c7c #fff;box-shadow:1px 1px 0 #a9a9a9"></div>
<svg width="1366" height="768" viewBox="0 0 1366 768"><path d="M45 658.500l-5 4.500 5 4.500z" fill="#a0a0a0"/><path d="M1139.500 658.500l5 4.500-5 4.500z" fill="#a0a0a0"/><path d="M1151.500 655v17M1200.500 655v17M1290.500 655v17M1359.500 655v17" stroke="#8e8e8e"/><path d="M1160.500 663.500a5.300 5.300 0 0 1 9.500-3.200" stroke="#4a4a4a" stroke-width="2.400" fill="none"/><path d="M1171.800 656.500l.3 6-5.600-1.200z" fill="#4a4a4a"/><path d="M1171.500 662.500a5.300 5.300 0 0 1-9.500 3.200" stroke="#4a4a4a" stroke-width="2.400" fill="none"/><path d="M1160.200 669.500l-.3-6 5.600 1.200z" fill="#4a4a4a"/><text x="1183" y="667.600" font-family="Liberation Sans" font-weight="bold" font-size="12" fill="#4d4d4d">D</text><path d="M1214 657l3.500 4h-2.500v4.500h2.500l-3.500 4-3.500-4h2.500v-4.500h-2.500z" fill="#3f3f3f"/><path d="M1235 656l3 3.500h-2v2.500h2.500v-2l3.500 3-3.500 3v-2h-2.500v2.500h2l-3 3.500-3-3.500h2v-2.500h-2.500v2l-3.500-3 3.500-3v2h2.500v-2.500h-2z" fill="#3f3f3f"/><circle cx="1256" cy="663" r="5.300" fill="#f6f6f6" stroke="#6d6d6d" stroke-width="1.200"/><path d="M1253 663h6" stroke="#3f3f3f" stroke-width="2"/><circle cx="1277" cy="663" r="5.300" fill="#f6f6f6" stroke="#6d6d6d" stroke-width="1.200"/><path d="M1274 663h6M1277 660v6" stroke="#3f3f3f" stroke-width="2"/><path d="M1306.500 658.500l-5 4.500 5 4.500zM1321.500 658.500l5 4.500-5 4.500z" fill="#c4c4c4"/><rect x="1338.500" y="657.500" width="12" height="11" fill="#f4f4f4" stroke="#4a4a4a" stroke-width="1.200"/><path d="M1338.500 659.500h12" stroke="#4a4a4a" stroke-width="1.600"/><path d="M1340.500 662.500h1.500M1343.500 662.500h5.500M1340.500 664.500h1.500M1343.500 664.500h5.500M1340.500 666.500h1.500M1343.500 666.500h5.500" stroke="#555" stroke-width="1"/></svg>
<div class="a" style="left:35px;top:675px;width:1331px;height:1px;background:#fbfbfb"></div>
<div class="a" style="left:0;top:676px;width:1366px;height:31px;background:#ebebeb"></div>
<div class="a" style="left:0;top:707px;width:1366px;height:1px;background:#fdfdfd"></div>
<div class="a" style="left:0;top:708px;width:1366px;height:1px;background:#9b9b9b"></div>
<div class="grip" style="left:4px;top:678px;width:8px;height:28px"><i style="top:13px"></i></div>
<div class="grip" style="left:262px;top:678px;width:8px;height:28px"><i style="top:13px"></i></div>
<div class="grip" style="left:389px;top:678px;width:8px;height:28px"><i style="top:13px"></i></div>
<div class="sep" style="left:144px;top:678px;height:28px"></div>
<div class="sep" style="left:255px;top:678px;height:28px"></div>
<div class="sep" style="left:384px;top:678px;height:28px"></div>
<div class="sep" style="left:567px;top:678px;height:28px"></div>
<div class="combo" style="left:14px;top:684px;width:128px;height:18px"></div>
<div class="cbtn" style="left:124px;top:685px;width:17px;height:16px"></div>
<div class="a" style="left:29px;top:693px;width:81px;height:1px;background:#000"></div>
<div class="combo" style="left:149px;top:684px;width:99px;height:18px"></div>
<div class="cbtn" style="left:230px;top:685px;width:17px;height:16px"></div>
<div class="a" style="left:161px;top:693px;width:59px;height:1px;background:#000"></div>
<svg width="1366" height="768" viewBox="0 0 1366 768"><path d="M128.500 691h8l-4 4zM234.500 691h8l-4 4zM368 691.500h7l-3.500 3.500z" fill="#000"/><rect x="272.5" y="682.500" width="10" height="10" fill="#00ff00" stroke="#a5a5a5"/><rect x="272.5" y="694.500" width="10" height="10" fill="#000000" stroke="#a5a5a5"/><rect x="284.5" y="682.500" width="10" height="10" fill="#f4bc4c" stroke="#a5a5a5"/><rect x="284.5" y="694.500" width="10" height="10" fill="#ff8000" stroke="#a5a5a5"/><rect x="296.5" y="682.500" width="10" height="10" fill="#ff0000" stroke="#a5a5a5"/><rect x="296.5" y="694.500" width="10" height="10" fill="#de5f0a" stroke="#a5a5a5"/><rect x="308.5" y="682.500" width="10" height="10" fill="#d060d0" stroke="#a5a5a5"/><rect x="308.5" y="694.500" width="10" height="10" fill="#7f80c0" stroke="#a5a5a5"/><rect x="320.5" y="682.500" width="10" height="10" fill="#ffc0cb" stroke="#a5a5a5"/><rect x="320.5" y="694.500" width="10" height="10" fill="#ffe4e1" stroke="#a5a5a5"/><rect x="332.5" y="682.500" width="10" height="10" fill="#ffffff" stroke="#a5a5a5"/><rect x="332.5" y="694.500" width="10" height="10" fill="#000060" stroke="#a5a5a5"/><rect x="344.5" y="682.500" width="10" height="10" fill="#009000" stroke="#a5a5a5"/><rect x="344.5" y="694.500" width="10" height="10" fill="#000090" stroke="#a5a5a5"/><rect x="356.5" y="682.500" width="10" height="10" fill="#005000" stroke="#a5a5a5"/><rect x="356.5" y="694.500" width="10" height="10" fill="#ffd700" stroke="#a5a5a5"/><rect x="295.500" y="681.500" width="12" height="12" fill="none" stroke="#fff"/><rect x="295.500" y="681.500" width="12" height="12" fill="none" stroke="#444" stroke-dasharray="1 1"/><rect x="404.5" y="688.500" width="15" height="12" rx="1.500" fill="#fff" stroke="#5a86b6" stroke-width="1.200"/><path d="M406.0 690h6" stroke="#a9c3de" stroke-width="1"/><path d="M405.5 697l2.500-2.500 2 1.500" stroke="#d01818" stroke-width="1.100" fill="none"/><text x="412.2" y="699.300" font-family="Liberation Sans" font-size="11.500" fill="#000">1</text><rect x="431.5" y="688.500" width="15" height="12" rx="1.500" fill="#fff" stroke="#5a86b6" stroke-width="1.200"/><path d="M433.0 690h6" stroke="#a9c3de" stroke-width="1"/><path d="M432.5 697l2.500-2.500 2 1.500" stroke="#d01818" stroke-width="1.100" fill="none"/><text x="439.2" y="699.300" font-family="Liberation Sans" font-size="11.500" fill="#000">2</text><rect x="458.6" y="688.500" width="15" height="12" rx="1.500" fill="#fff" stroke="#5a86b6" stroke-width="1.200"/><path d="M460.1 690h6" stroke="#a9c3de" stroke-width="1"/><path d="M459.6 697l2.500-2.500 2 1.500" stroke="#d01818" stroke-width="1.100" fill="none"/><text x="466.3" y="699.300" font-family="Liberation Sans" font-size="11.500" fill="#000">3</text><rect x="485.6" y="688.500" width="15" height="12" rx="1.500" fill="#fff" stroke="#5a86b6" stroke-width="1.200"/><path d="M487.1 690h6" stroke="#a9c3de" stroke-width="1"/><path d="M486.6 697l2.500-2.500 2 1.500" stroke="#d01818" stroke-width="1.100" fill="none"/><text x="493.3" y="699.300" font-family="Liberation Sans" font-size="11.500" fill="#000">4</text><rect x="512.6" y="688.500" width="15" height="12" rx="1.500" fill="#fff" stroke="#5a86b6" stroke-width="1.200"/><path d="M514.1 690h6" stroke="#a9c3de" stroke-width="1"/><path d="M513.6 697l2.500-2.500 2 1.500" stroke="#d01818" stroke-width="1.100" fill="none"/><text x="520.3" y="699.300" font-family="Liberation Sans" font-size="11.500" fill="#000">5</text><rect x="539.6" y="688.500" width="15" height="12" rx="1.500" fill="#fff" stroke="#5a86b6" stroke-width="1.200"/><path d="M541.1 690h6" stroke="#a9c3de" stroke-width="1"/><path d="M540.6 697l2.500-2.500 2 1.500" stroke="#d01818" stroke-width="1.100" fill="none"/><text x="547.4" y="699.300" font-family="Liberation Sans" font-size="11.500" fill="#000">6</text></svg>
<div class="a" style="left:0;top:709px;width:1366px;height:20px;background:#3f3f3f"></div>
<div style="position:absolute;left:10.00px;top:712.00px;height:16px;line-height:16px;font-size:12.60px;letter-spacing:0.000px;white-space:nowrap;transform:scaleX(0.9729);transform-origin:0 0;"><span style="color:#fff">For&nbsp;Help,&nbsp;press&nbsp;F1</span></div>
<div style="position:absolute;left:1095.00px;top:712.00px;height:16px;line-height:16px;font-size:12.60px;letter-spacing:0.000px;white-space:nowrap;transform:scaleX(0.9753);transform-origin:0 0;"><span style="color:#fff">29/05/2020</span></div>
<div style="position:absolute;left:1252.00px;top:712.00px;height:16px;line-height:16px;font-size:12.60px;letter-spacing:0.000px;white-space:nowrap;transform:scaleX(0.9771);transform-origin:0 0;"><span style="color:#fff">0.16674</span></div>
<div class="a" style="left:1345px;top:711px;width:21px;height:15px;background:#f4f4f4"></div>
<div style="position:absolute;left:1352.00px;top:710.00px;height:16px;line-height:16px;font-size:13.50px;letter-spacing:0.000px;white-space:nowrap;font-weight:bold;"><span style="color:#007a1f">$</span></div>
<div class="a" style="left:0;top:729px;width:1366px;height:39px;background:linear-gradient(96deg,#b8862a 0%,#b98630 12%,#bd8632 30%,#be802e 40%,#c0822f 53.800%,#c9a264 55.800%,#cba86c 60%,#cdab72 78%,#ceac72 100%)"></div><div class="a" style="left:1100px;top:729px;width:266px;height:39px;background:linear-gradient(29.100deg,rgba(222,167,48,0) 40.500%,rgba(222,167,48,.6) 44.500%,#dea730 48%,#dfa62c 100%)"></div><div class="a" style="left:0;top:729px;width:1366px;height:2px;background:linear-gradient(180deg,rgba(90,70,30,.55),rgba(90,70,30,0))"></div><div class="a" style="left:176px;top:730px;width:58px;height:38px;background:rgba(255,246,220,.46);border:1px solid rgba(255,252,240,.8)"></div><div class="a" style="left:238px;top:730px;width:58px;height:38px;background:rgba(255,244,215,.27);border:1px solid rgba(255,248,228,.42)"></div><div class="a" style="left:300px;top:730px;width:58px;height:38px;background:rgba(255,244,215,.27);border:1px solid rgba(255,248,228,.42)"></div><div class="a" style="left:424px;top:730px;width:58px;height:38px;background:rgba(255,244,215,.27);border:1px solid rgba(255,248,228,.42)"></div><div class="a" style="left:486px;top:730px;width:58px;height:38px;background:rgba(255,244,215,.27);border:1px solid rgba(255,248,228,.42)"></div><div class="a" style="left:541px;top:730px;width:3px;height:38px;border-left:1px solid rgba(255,245,220,.35);border-right:1px solid rgba(255,245,220,.35)"></div><svg width="1366" height="768" viewBox="0 0 1366 768"><defs><radialGradient id="ff" cx=".45" cy=".4"><stop offset="0" stop-color="#2a6fd0"/><stop offset=".55" stop-color="#1c4da0"/><stop offset=".6" stop-color="#f08a1c"/><stop offset="1" stop-color="#e0501a"/></radialGradient></defs><path d="M12 738.500l11-1.600v10.600h-11zM24.500 736.700l13.500-2v12.800h-13.500zM12 749h11v10.600l-11-1.600zM24.500 749h13.500v12.800l-13.500-2z" fill="#fff"/><linearGradient id="exb" x1="0" y1="0" x2="0" y2="1"><stop offset="0" stop-color="#bfe4fb"/><stop offset="1" stop-color="#4b9bd6"/></linearGradient><path d="M67 739.500h9l2 2.500h17.500v19h-28.500z" fill="#f1cf72" stroke="#d3ad4e" stroke-width=".8"/><path d="M66.500 744.500h29.500v16.500h-29.500z" fill="#fbe9a6" stroke="#dfc069" stroke-width=".7"/><rect x="69" y="737" width="4" height="2.500" fill="#2db34a"/><rect x="77" y="738.500" width="4" height="2.500" fill="#d6402f"/><rect x="85" y="740.500" width="4" height="2.500" fill="#3a8ee0"/><rect x="72" y="739" width="14" height="3" fill="#fff" opacity=".8"/><path d="M70.500 751.500h20.500l2 3v8.500h-5.500v-6h-13.500v6h-5.500v-8.500z" fill="url(#exb)" stroke="#5b9fd0" stroke-width=".8"/><path d="M129 736.500l17-3v29l-17-3z" fill="#d24625"/><rect x="146" y="738" width="12" height="20" fill="#f4f4f4" stroke="#d24625"/><path d="M148 746h8M148 750h8M148 754h8" stroke="#d24625"/><circle cx="152" cy="742" r="2.500" fill="none" stroke="#d24625"/><text x="132.500" y="753.500" font-family="Liberation Sans" font-weight="bold" font-size="15" fill="#fff">P</text><linearGradient id="msb" x1="0" y1="0" x2="0" y2="1"><stop offset="0" stop-color="#4c4c4c"/><stop offset=".5" stop-color="#1c1c1c"/><stop offset="1" stop-color="#000"/></linearGradient><linearGradient id="mso" x1="0" y1="0" x2="0" y2="1"><stop offset="0" stop-color="#f26a1b"/><stop offset="1" stop-color="#f7981d"/></linearGradient><rect x="189.500" y="732.500" width="31" height="31" rx="3.500" fill="url(#msb)" stroke="#2a2a2a"/><path d="M197.500 761l1.500-11h3l-1.500 11zM202.500 761l2.500-19h3.500l-2.500 19zM208 761l3.500-27h3.500l-3.500 27z" fill="url(#mso)"/><circle cx="266.500" cy="748.500" r="15" fill="#dc4437"/><path d="M266.500 748.500L253.500 741a15 15 0 0 0 5.500 20.500z" fill="#1ea362"/><path d="M266.500 748.500l-7.500 13a15 15 0 0 0 20.500-20.500z" fill="#fbc116" opacity="1"/><path d="M253.500 741a15 15 0 0 1 26 0h-13z" fill="#dc4437"/><circle cx="266.500" cy="748.500" r="7" fill="#f4f4f4"/><circle cx="266.500" cy="748.500" r="5.500" fill="#4a8af4"/><rect x="328" y="736" width="15" height="25" fill="#f4f4f4" stroke="#2a5699"/><path d="M332 741h9M332 745h9M332 749h9M332 753h9M332 757h9" stroke="#2a5699"/><path d="M314 736.500l17-3v30l-17-3z" fill="#2a5699"/><text x="316" y="754" font-family="Liberation Sans" font-weight="bold" font-size="13.500" fill="#fff">W</text><rect x="376.500" y="732.500" width="30" height="31" rx="4" fill="#1c6af2"/><rect x="376.500" y="760" width="30" height="3.500" rx="2" fill="#1557cc"/><path d="M382.500 755v-9.500a2.500 2.500 0 0 1 2.500-2.500h13a2.500 2.500 0 0 1 2.500 2.500v9.500h-6v-6.500h-6v6.500z" fill="#fff"/><linearGradient id="clc" x1="0" y1="0" x2="0" y2="1"><stop offset="0" stop-color="#eaf3fb"/><stop offset="1" stop-color="#b4d0e8"/></linearGradient><rect x="441.500" y="733.500" width="21" height="29" rx="2" fill="url(#clc)" stroke="#6e9fca"/><rect x="443" y="735" width="18" height="2" fill="#f2a43a"/><rect x="443.500" y="738.500" width="17" height="7" fill="#e6f1fb" stroke="#7ba6cf"/><text x="455" y="744.800" font-family="Liberation Mono" font-size="7.500" fill="#456">0</text><rect x="443.5" y="747.6" width="3" height="2.600" fill="#ffffff"/><rect x="447.9" y="747.6" width="3" height="2.600" fill="#ffffff"/><rect x="452.3" y="747.6" width="3" height="2.600" fill="#ffffff"/><rect x="456.7" y="747.6" width="3" height="2.600" fill="#ffffff"/><rect x="443.5" y="751.3000000000001" width="3" height="2.600" fill="#ffffff"/><rect x="447.9" y="751.3000000000001" width="3" height="2.600" fill="#ffffff"/><rect x="452.3" y="751.3000000000001" width="3" height="2.600" fill="#ffffff"/><rect x="456.7" y="751.3000000000001" width="3" height="2.600" fill="#ffffff"/><rect x="443.5" y="755.0" width="3" height="2.600" fill="#ffffff"/><rect x="447.9" y="755.0" width="3" height="2.600" fill="#ffffff"/><rect x="452.3" y="755.0" width="3" height="2.600" fill="#ffffff"/><rect x="456.7" y="755.0" width="3" height="2.600" fill="#f09a28"/><rect x="443.5" y="758.7" width="3" height="2.600" fill="#ffffff"/><rect x="447.9" y="758.7" width="3" height="2.600" fill="#ffffff"/><rect x="452.3" y="758.7" width="3" height="2.600" fill="#ffffff"/><rect x="456.7" y="758.7" width="3" height="2.600" fill="#f09a28"/><rect x="511" y="736" width="15" height="25" fill="#f4f4f4" stroke="#1e7145"/><path d="M514 741h10M514 745h10M514 749h10M514 753h10M514 757h10M519 738v22" stroke="#1e7145"/><path d="M497 736.500l17-3v30l-17-3z" fill="#1e7145"/><text x="500.500" y="754" font-family="Liberation Sans" font-weight="bold" font-size="14" fill="#fff">X</text><path d="M590 750a13 13 0 1 0-2.500 7.500h-6a8 8 0 1 1 1.500-8.500h-15v4h22z" fill="#3aa0e8" stroke="#1f7fd0" stroke-width=".8"/><path d="M562 760c-3-6 4-17 14-23 6-3.500 12-4 14-1" stroke="#f2c230" stroke-width="2.200" fill="none"/><radialGradient id="ffo" cx=".5" cy=".35" r=".7"><stop offset="0" stop-color="#ffc83a"/><stop offset=".6" stop-color="#f28a1e"/><stop offset="1" stop-color="#d9471c"/></radialGradient><radialGradient id="ffb" cx=".6" cy=".35" r=".7"><stop offset="0" stop-color="#4aa3ea"/><stop offset="1" stop-color="#1a3f93"/></radialGradient><circle cx="639" cy="748.500" r="15" fill="url(#ffo)"/><circle cx="641" cy="746.500" r="10.500" fill="url(#ffb)"/><path d="M625.500 742c2-4 5-6.500 8-7.500-1 1.500-1.500 3-1.200 4.500 2-1 4.500-1 6.200 0-2 .5-3.500 2-3.800 3.500 2 .2 4 .8 5 2-2 .3-3.800 1.500-4.500 3 1.500 2.500 5 3.200 8 2 2.500-1 4.500-3.500 5-6 1.500 3 1.200 8-1.500 11.500-3 4-8 5.500-12.500 4.500-6-1.300-10-7-10-13 0-1.500.4-3 1.300-4.500z" fill="url(#ffo)"/><rect x="686" y="733" width="30" height="30" fill="#d9472b"/><circle cx="701" cy="748" r="10.500" fill="none" stroke="#fff" stroke-width="2.400"/><text x="696" y="754" font-family="Liberation Sans" font-weight="bold" font-size="16" fill="#fff">?</text><rect x="762" y="740" width="17" height="14" fill="#f4f4f4" stroke="#0f6cbd"/><path d="M762 740l8.500 8 8.500-8" stroke="#0f6cbd" stroke-width="1.500" fill="none"/><path d="M748 736.500l16-3v30l-16-3z" fill="#0f6cbd"/><ellipse cx="756" cy="748.500" rx="3.600" ry="4.600" fill="none" stroke="#fff" stroke-width="2.200"/><path d="M812 734h22l5 5v22h-27z" fill="#e9eee4" stroke="#9aa494"/><path d="M810 738h22l4 6v20h-26z" fill="#f7f9f4" stroke="#a8b0a0"/><path d="M815 745h12v4h-6zM821 753h12v-4l4 6-4 5v-3h-12z" fill="#2f6b3a"/><rect x="871.500" y="732.500" width="31" height="31" rx="5" fill="none" stroke="#b22a3e" stroke-width="1.400"/><text x="875" y="758.500" font-family="Liberation Sans" font-size="15.500" fill="#b22a3e" textLength="24.500" lengthAdjust="spacingAndGlyphs">Pro</text><path d="M879 743h14" stroke="#444" stroke-width="1.500" stroke-dasharray="1.500 .7"/><path d="M890 739.500l4 2-4 1.500z" fill="#c22"/><path d="M1078 751.500l4-4 4 4z" fill="#fff"/><rect x="1101" y="741" width="6" height="5" fill="#8a8a8a" stroke="#555" stroke-width=".6"/><rect x="1100" y="746" width="8" height="8" rx="1" fill="#9b9b9b" stroke="#5d5d5d" stroke-width=".6"/><path d="M1104 754v3" stroke="#555" stroke-width="1.500"/><circle cx="1110" cy="753" r="4.200" fill="#27a844" stroke="#f4f4f4" stroke-width=".8"/><path d="M1108 753l1.500 1.500 2.500-3" stroke="#fff" stroke-width="1.200" fill="none"/><circle cx="1131.500" cy="749.500" r="7.800" fill="#e9f2fa" stroke="#7fa3c4" stroke-width="1.200"/><path d="M1126 746c3-3 8-3 10 1 1.500 3 0 6-1 8" stroke="#2d6cc0" stroke-width="2.200" fill="none"/><path d="M1127 752l3-3 3 2" stroke="#4a8a5a" stroke-width="1.400" fill="none"/><path d="M1147.500 746.500h3l4-4v14l-4-4h-3z" fill="#fff"/><path d="M1157 745.500c1.500 2.500 1.500 5.500 0 8M1159.500 743.500c2.500 4 2.500 8 0 12" stroke="#fff" stroke-width="1.100" fill="none"/><path d="M1172.500 741v16" stroke="#fff" stroke-width="1.500"/><path d="M1174 742.500c3-1.500 5 1.500 8 .5l3.500-.5v6.500c-4 1.500-6-1.500-9-.5l-2.500.5z" fill="#fff"/><path d="M1196 757v-3M1199 757v-5.500M1202 757v-8M1205 757v-11M1208 757v-14" stroke="#fff" stroke-width="1.700"/><rect x="1226.500" y="744.500" width="7" height="12" fill="none" stroke="#fff" stroke-width="1.400"/><rect x="1228.500" y="742.500" width="3" height="2" fill="#fff"/><path d="M1219.500 742v4M1223.500 742v4M1218 746h7v3.500h-7zM1221.500 749.500v7.500" stroke="#fff" stroke-width="1.300" fill="none"/></svg><div style="position:absolute;left:1249.30px;top:741.50px;height:16px;line-height:16px;font-size:12.20px;letter-spacing:0.000px;white-space:nowrap;transform:scaleX(0.8586);transform-origin:0 0;"><span style="color:#fff">POR</span></div><div style="position:absolute;left:1305.00px;top:733.00px;height:16px;line-height:16px;font-size:12.20px;letter-spacing:0.000px;white-space:nowrap;transform:scaleX(0.8517);transform-origin:0 0;"><span style="color:#fff">18:53</span></div><div style="position:absolute;left:1289.50px;top:750.50px;height:16px;line-height:16px;font-size:12.20px;letter-spacing:0.000px;white-space:nowrap;transform:scaleX(0.9254);transform-origin:0 0;"><span style="color:#fff">19/05/2020</span></div>
</body></html>
